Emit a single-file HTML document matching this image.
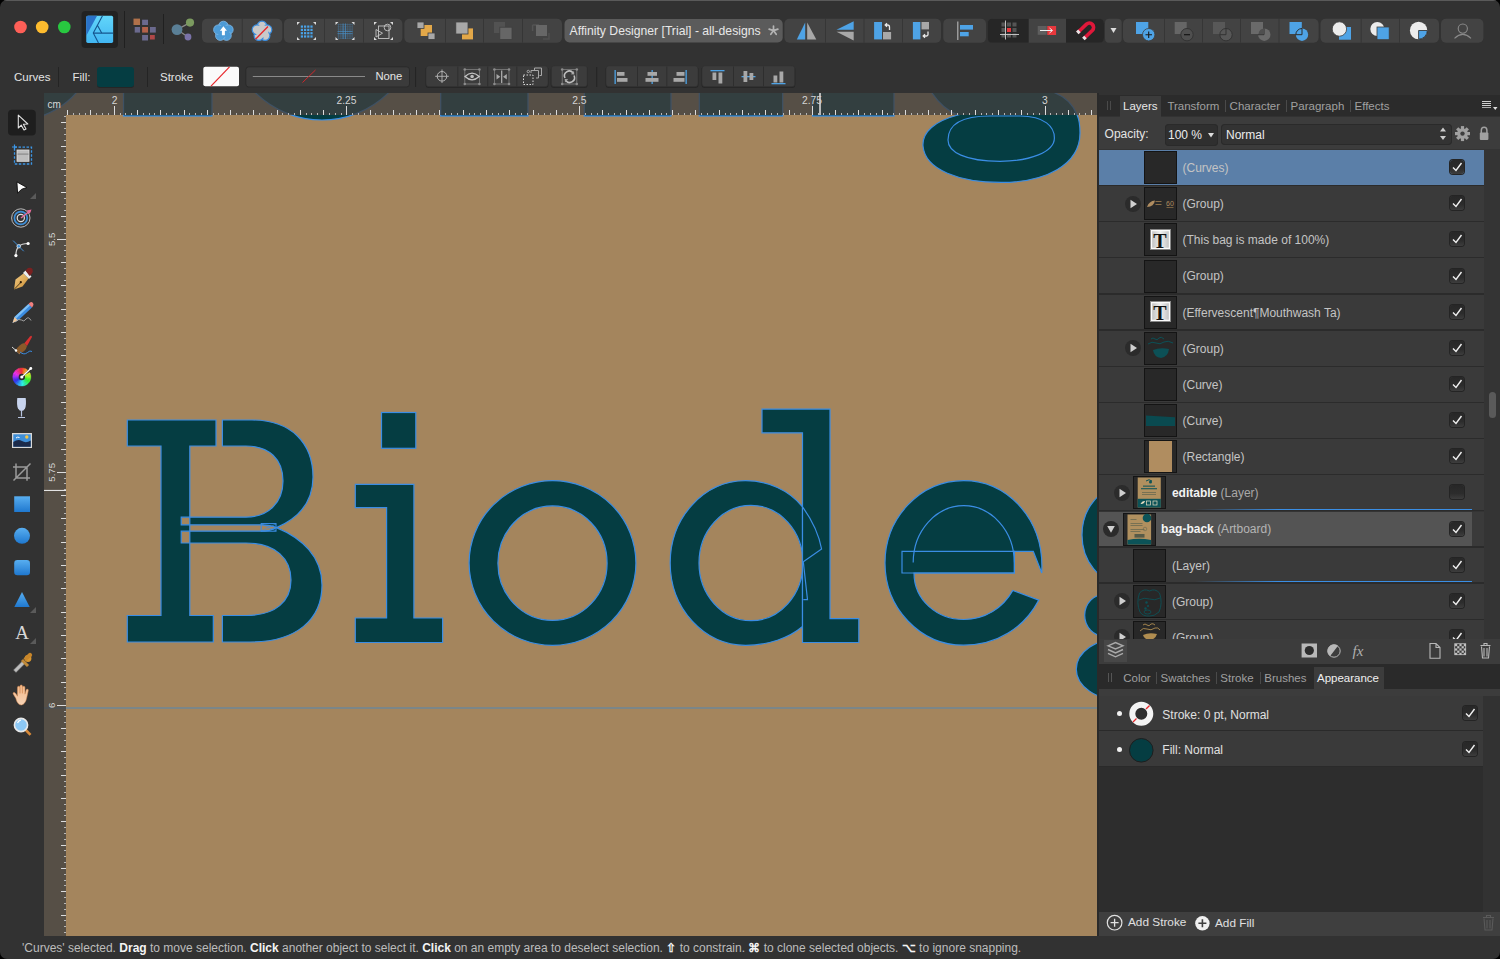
<!DOCTYPE html>
<html><head><meta charset="utf-8">
<style>
*{box-sizing:border-box}
html,body{margin:0;padding:0;width:1500px;height:959px;overflow:hidden;background:#000}
body{font-family:"Liberation Sans",sans-serif;color:#e6e6e6}
.a{position:absolute}
#win{position:absolute;left:0;top:0;width:1500px;height:959px;background:#323232;border-radius:7px;overflow:hidden}
.btn{position:absolute;top:19px;height:24px;background:#3e3e3e;border-radius:4px}
.cbtn{position:absolute;top:66px;height:21px;background:#3a3a3a;border-radius:3px;border:1px solid #2a2a2a}
.sep{position:absolute;width:1px;background:#262626}
.t{position:absolute;white-space:nowrap;line-height:1}
.row{position:absolute;left:1099px;width:385px;height:35px;background:#3a3a3a;border-bottom:1px solid #2b2b2b}
.thumb{position:absolute;top:1px;width:33px;height:33px;background:#282828;border:1px solid #111}
.rt{position:absolute;top:11px;font-size:12px;color:#d2d2d2;white-space:nowrap;line-height:1}
.chk{position:absolute;left:351px;top:10px;width:14px;height:14px;background:#2c2c2c;border-radius:3px;border:1px solid #1f1f1f}
.exp{position:absolute;top:10px;width:15px;height:15px;border-radius:50%;background:#2c2c2c}
.tool{position:absolute;left:9px;width:26px;height:26px}
</style></head>
<body>
<div id="win">
<!-- TOOLBAR -->
<!-- window top border -->
<div class="a" style="left:0;top:0;width:1500px;height:1px;background:#5a5a5a"></div>
<svg class="a" style="left:0;top:0" width="1500" height="60" viewBox="0 0 1500 60">
 <!-- traffic lights -->
 <circle cx="20.5" cy="27" r="6.3" fill="#fe5f57"/>
 <circle cx="42.2" cy="27" r="6.3" fill="#febc2e"/>
 <circle cx="64.3" cy="27" r="6.3" fill="#28c840"/>
 <!-- affinity logo -->
 <rect x="81.5" y="11" width="36.5" height="37" rx="4" fill="#222"/>
 <defs><linearGradient id="lg" x1="0" y1="0" x2="0" y2="1"><stop offset="0" stop-color="#62d6fa"/><stop offset="1" stop-color="#42b6f2"/></linearGradient></defs>
 <rect x="86.25" y="15.8" width="26.9" height="27.1" rx="1.6" fill="url(#lg)"/>
 <path d="M86.25,35.8 V17.4 Q86.25,15.8 87.85,15.8 H97.1Z" fill="#2a72c8"/>
 <path d="M102.5,15.8 L93.3,33.1 L98.5,42.9 M97.7,25.8 L101.7,32.9" stroke="#15558e" stroke-width="1.1" fill="none"/>
 <path d="M93.3,33.1 H113.1" stroke="#15558e" stroke-width="1.3"/>
 <line x1="124.5" y1="11" x2="124.5" y2="48" stroke="#202020"/>
 <!-- personas -->
 <rect x="133.5" y="18.6" width="6.5" height="6.4" fill="#b0714a"/>
 <rect x="142.1" y="19.7" width="5.9" height="5.3" fill="#6b6a8e"/>
 <rect x="134.7" y="27" width="5.3" height="5.6" fill="#6b6a8e"/>
 <rect x="142.1" y="27" width="5.9" height="5.6" fill="#b3624a"/>
 <rect x="150" y="27" width="5.8" height="5.6" fill="#6b6a8e"/>
 <rect x="142.1" y="35" width="5.9" height="5.5" fill="#6b6a8e"/>
 <rect x="150" y="35" width="4.8" height="4.5" fill="#b04848"/>
 <line x1="163.5" y1="14" x2="163.5" y2="44" stroke="#202020"/>
 <!-- share -->
 <path d="M177,29.6 L190,22.6 M177,29.6 L188,37" stroke="#8a8a8a" stroke-width="1.2"/>
 <circle cx="177" cy="29.6" r="5.4" fill="#5a7f96"/>
 <circle cx="190" cy="22.6" r="4.1" fill="#7b9a5f"/>
 <circle cx="188" cy="37" r="3.4" fill="#7a72a8"/>
 <!-- button groups -->
 <g fill="#434343">
  <rect x="202" y="18.7" width="80.3" height="24" rx="5"/>
  <rect x="284" y="18.7" width="118.4" height="24" rx="5"/>
  <rect x="404.4" y="18.7" width="157.6" height="24" rx="5"/>
  <rect x="784.4" y="18.7" width="156.6" height="24" rx="5"/>
  <rect x="943.3" y="18.7" width="42.7" height="24" rx="5"/>
  <rect x="987.6" y="18.7" width="116.4" height="24" rx="5"/>
  <rect x="1105" y="18.7" width="16.7" height="24" rx="4"/>
  <rect x="1123" y="18.7" width="195.6" height="24" rx="5"/>
  <rect x="1320.5" y="18.7" width="118.5" height="24" rx="5"/>
  <rect x="1441" y="18.7" width="42.4" height="24" rx="5"/>
 </g>
 <g fill="#262626">
  <path d="M992.6,18.7 H1028.7 V42.7 H992.6 Q987.6,42.7 987.6,37.7 V23.7 Q987.6,18.7 992.6,18.7Z"/>
  <path d="M1066,18.7 H1099 Q1104,18.7 1104,23.7 V37.7 Q1104,42.7 1099,42.7 H1066Z"/>
 </g>
 <g stroke="#363636" stroke-width="1">
  <line x1="242.3" y1="18.7" x2="242.3" y2="42.7"/>
  <line x1="324.5" y1="18.7" x2="324.5" y2="42.7"/><line x1="363.5" y1="18.7" x2="363.5" y2="42.7"/>
  <line x1="445.5" y1="18.7" x2="445.5" y2="42.7"/><line x1="483.5" y1="18.7" x2="483.5" y2="42.7"/><line x1="522.5" y1="18.7" x2="522.5" y2="42.7"/>
  <line x1="825.5" y1="18.7" x2="825.5" y2="42.7"/><line x1="864" y1="18.7" x2="864" y2="42.7"/><line x1="902.5" y1="18.7" x2="902.5" y2="42.7"/>
  <line x1="1164.5" y1="18.7" x2="1164.5" y2="42.7"/><line x1="1202.5" y1="18.7" x2="1202.5" y2="42.7"/><line x1="1240.5" y1="18.7" x2="1240.5" y2="42.7"/><line x1="1279" y1="18.7" x2="1279" y2="42.7"/>
  <line x1="1361.2" y1="18.7" x2="1361.2" y2="42.7"/><line x1="1399.5" y1="18.7" x2="1399.5" y2="42.7"/>
 </g>
 <!-- G1 icons: flowers -->
 <g transform="translate(223.4,31.3)">
  <g fill="#4d9bd6" stroke="#7fb8e6" stroke-width="0.8">
   <circle cx="0" cy="-5.3" r="4.8"/><circle cx="5" cy="-1.6" r="4.8"/><circle cx="3.1" cy="4.3" r="4.8"/><circle cx="-3.1" cy="4.3" r="4.8"/><circle cx="-5" cy="-1.6" r="4.8"/>
  </g>
  <circle r="6" fill="#4d9bd6"/>
  <path d="M0,-5 L-3.5,-0.5 H-1.5 V4 H1.5 V-0.5 H3.5Z" fill="#fff"/>
 </g>
 <g transform="translate(262,31.3)">
  <g fill="#c9c9c9" stroke="#3a8ee0" stroke-width="1.2">
   <circle cx="0" cy="-5.3" r="4.8"/><circle cx="5" cy="-1.6" r="4.8"/><circle cx="3.1" cy="4.3" r="4.8"/><circle cx="-3.1" cy="4.3" r="4.8"/><circle cx="-5" cy="-1.6" r="4.8"/>
  </g>
  <circle r="6.5" fill="#c9c9c9"/>
  <line x1="-6.5" y1="8" x2="6" y2="-4.8" stroke="#e8262b" stroke-width="1.3"/>
 </g>
 <!-- G2 icons -->
 <g fill="#4aa3e8">
  <g id="dots4">
  <rect x="300.8" y="25.5" width="2.2" height="2.2"/><rect x="304" y="25.5" width="2.2" height="2.2"/><rect x="307.2" y="25.5" width="2.2" height="2.2"/><rect x="310.4" y="25.5" width="2.2" height="2.2"/>
  <rect x="300.8" y="28.8" width="2.2" height="2.2"/><rect x="304" y="28.8" width="2.2" height="2.2"/><rect x="307.2" y="28.8" width="2.2" height="2.2"/><rect x="310.4" y="28.8" width="2.2" height="2.2"/>
  <rect x="300.8" y="32.1" width="2.2" height="2.2"/><rect x="304" y="32.1" width="2.2" height="2.2"/><rect x="307.2" y="32.1" width="2.2" height="2.2"/><rect x="310.4" y="32.1" width="2.2" height="2.2"/>
  <rect x="300.8" y="35.4" width="2.2" height="2.2"/><rect x="304" y="35.4" width="2.2" height="2.2"/><rect x="307.2" y="35.4" width="2.2" height="2.2"/><rect x="310.4" y="35.4" width="2.2" height="2.2"/>
  </g>
 </g>
 <g fill="#dadada">
  <path d="M297,25 V22 H300Z M313,22 H316 V25Z M316,37 V40 H313Z M300,40 H297 V37Z"/>
  <path d="M335.5,25 V22 H338.5Z M351.5,22 H354.5 V25Z M354.5,37 V40 H351.5Z M338.5,40 H335.5 V37Z"/>
  <path d="M374,25 V22 H377Z M390,22 H393 V25Z M393,37 V40 H390Z M377,40 H374 V37Z"/>
 </g>
 <g stroke="#4aa3e8" stroke-width="0.5" opacity="0.45">
  <path d="M337.5,24.5 H352.5 M337.5,26.8 H352.5 M337.5,29.1 H352.5 M337.5,31.4 H352.5 M337.5,33.7 H352.5 M337.5,36 H352.5 M337.5,38.3 H352.5"/>
  <path d="M338.5,23.5 V39 M340.8,23.5 V39 M343.1,23.5 V39 M345.4,23.5 V39 M347.7,23.5 V39 M350,23.5 V39 M352.3,23.5 V39"/>
 </g>
 <path d="M343.1,23.5 V39 M345.4,23.5 V39 M337.5,31.4 H352.5 M337.5,33.7 H352.5" stroke="#4aa3e8" stroke-width="0.6" opacity="0.8"/>
 <g stroke="#c4c4c4" stroke-width="0.9" fill="none">
  <rect x="378.5" y="26" width="10.5" height="12.5"/>
  <circle cx="387.5" cy="27.5" r="3.3"/>
  <path d="M376,29.5 V37 L382.5,33.2Z"/>
 </g>
 <!-- G3 arrange -->
 <rect x="420.7" y="25" width="11.3" height="11" fill="#e3a849"/>
 <rect x="417" y="22" width="7" height="6.4" fill="#a8a8a8" stroke="#3f3f3f" stroke-width="0.8"/>
 <rect x="428" y="33" width="7" height="6.4" fill="#a8a8a8" stroke="#3f3f3f" stroke-width="0.8"/>
 <rect x="462" y="28.4" width="11" height="11" fill="#e3a849"/>
 <rect x="455.8" y="22" width="12.2" height="12" fill="#a8a8a8" stroke="#3f3f3f" stroke-width="0.8"/>
 <rect x="494" y="22" width="11" height="11" fill="#525252"/>
 <rect x="499.8" y="27.2" width="12.2" height="12.2" fill="#666" stroke="#3f3f3f" stroke-width="0.8"/>
 <path d="M532.6,25 V31 M532.6,25 H539" stroke="#545454" stroke-width="1.5"/>
 <rect x="536" y="25" width="11" height="11" fill="#676767"/>
 <path d="M549,33 V39 H543" stroke="#505050" stroke-width="1.5" fill="none"/>
 <!-- title pill -->
 <rect x="564.5" y="19" width="218.2" height="23.5" rx="5" fill="#5b5b5b"/>
 <!-- G4 flips -->
 <path d="M796.8,39.4 L805.2,22.4 V39.4Z" fill="#4ea3e6"/>
 <path d="M807.2,22.4 V39.4 H816.3Z" fill="#a8a8a8"/>
 <path d="M836.5,29.7 L853.7,21.2 V29.7Z" fill="#4ea3e6"/>
 <path d="M836.5,31.8 H853.7 V40.5Z" fill="#a8a8a8"/>
 <rect x="874.1" y="22" width="7.9" height="17.4" fill="#4ea3e6"/>
 <rect x="883" y="32" width="8.1" height="7.4" fill="#a8a8a8"/>
 <path d="M889.5,30 V27 Q889.5,25 887.5,25 H885.5 M887,23.3 L885.2,25 L887,26.7" stroke="#e8e8e8" stroke-width="1.3" fill="none"/>
 <rect x="912.9" y="22" width="7.5" height="17.4" fill="#4ea3e6"/>
 <rect x="921.5" y="22" width="7.5" height="7.4" fill="#a8a8a8"/>
 <path d="M928,31.5 V34.5 Q928,36 926.5,36 H923.5 M925,34.3 L923.2,36 L925,37.7" stroke="#e8e8e8" stroke-width="1.3" fill="none"/>
 <!-- G5 align -->
 <rect x="957" y="21.5" width="1.5" height="18.5" fill="#9a9a9a"/>
 <rect x="960" y="25" width="13" height="4.6" fill="#4ea3e6"/>
 <rect x="960" y="32" width="8.7" height="4.3" fill="#4ea3e6"/>
 <!-- G6 snapping -->
 <g fill="#555">
  <rect x="1001.5" y="22.5" width="4" height="4"/><rect x="1007" y="22.5" width="4" height="4"/><rect x="1012.5" y="22.5" width="4" height="4"/>
  <rect x="1001.5" y="28" width="4" height="4"/><rect x="1012.5" y="28" width="4" height="4"/>
  <rect x="1001.5" y="33.5" width="4" height="4"/><rect x="1007" y="33.5" width="4" height="4"/><rect x="1012.5" y="33.5" width="4" height="4"/>
 </g>
 <rect x="1007" y="28" width="4" height="4" fill="#e8383d"/>
 <path d="M1005.5,20.5 V39.5 M1000,34.5 H1019" stroke="#cfcfcf" stroke-width="0.9"/>
 <rect x="1037.7" y="26" width="9" height="8.8" fill="#5e5e5e"/>
 <rect x="1047.3" y="26" width="8.8" height="9" fill="#e8383d"/>
 <path d="M1040,30.5 H1052 M1049.5,28 L1052.5,30.5 L1049.5,33" stroke="#ececec" stroke-width="1" fill="none"/>
 <path d="M1077.5,32.7 L1086.5,24.2 A4.25,4.25 0 0 1 1092.5,30.2 L1083.6,38.8" stroke="#e0183a" stroke-width="3.6" fill="none"/>
 <path d="M1077.3,32.9 L1079.4,30.9 M1083.4,39 L1085.5,37" stroke="#e4e4e4" stroke-width="3.6"/>
 <path d="M1110.5,28 H1116.5 L1113.5,33Z" fill="#dcdcdc"/>
 <!-- G7 boolean -->
 <rect x="1136" y="22" width="12.3" height="12" fill="#4ea3e6"/>
 <circle cx="1148.7" cy="34.7" r="6.2" fill="#4ea3e6" stroke="#3f3f3f" stroke-width="0.8"/>
 <path d="M1145.5,34.7 H1152 M1148.7,31.5 V38" stroke="#1a1a1a" stroke-width="1.1"/>
 <rect x="1174.7" y="22" width="12" height="12" fill="#666"/>
 <circle cx="1187" cy="34.7" r="6.2" fill="#4f4f4f" stroke="#333" stroke-width="1"/>
 <path d="M1184,34.7 H1190" stroke="#151515" stroke-width="1.2"/>
 <rect x="1213" y="22" width="12" height="12" fill="#585858"/>
 <circle cx="1226" cy="34.7" r="6.2" fill="#575757" stroke="#333" stroke-width="1"/>
 <path d="M1220,34.7 H1226 V28.5" stroke="#333" stroke-width="1" fill="none"/>
 <rect x="1251" y="22" width="12" height="12" fill="#6a6a6a"/>
 <circle cx="1264.3" cy="34.7" r="6.2" fill="#6a6a6a"/>
 <path d="M1258,34.7 H1264 V28.5" stroke="#333" stroke-width="1" fill="none"/>
 <path d="M1258.5,34 A6.2,6.2 0 0 1 1264.3,28.5 V34Z" fill="#4f4f4f"/>
 <rect x="1289.5" y="22" width="12.3" height="12" fill="#4ea3e6"/>
 <circle cx="1302" cy="34.7" r="6.2" fill="#4ea3e6"/>
 <path d="M1295.8,34.7 A6.2,6.2 0 0 1 1302,28.5 V34.7Z" fill="none" stroke="#2a2a2a" stroke-width="1"/>
 <!-- G8 geometry -->
 <rect x="1339" y="27" width="12" height="12.7" fill="#4ea3e6"/>
 <circle cx="1339.4" cy="29" r="7.2" fill="#ececec" stroke="#3f3f3f" stroke-width="0.8"/>
 <circle cx="1377.3" cy="29" r="7" fill="#ececec"/>
 <rect x="1377" y="27" width="12.2" height="12.7" fill="#4ea3e6" stroke="#3f3f3f" stroke-width="0.8"/>
 <circle cx="1418.6" cy="30.5" r="8.7" fill="#ececec"/>
 <path d="M1418.6,30.5 H1427.3 A8.7,8.7 0 0 1 1418.6,39.2Z" fill="#4ea3e6" stroke="#2a2a2a" stroke-width="0.8"/>
 <!-- person -->
 <circle cx="1462.8" cy="28.6" r="4.6" fill="none" stroke="#8a8a8a" stroke-width="1.1"/>
 <path d="M1454.5,38.3 Q1462.8,30.5 1471,38.3" fill="none" stroke="#8a8a8a" stroke-width="1.1"/>
</svg>
<div class="t" style="left:569.6px;top:25px;font-size:12.2px;color:#e8e8e8">Affinity Designer [Trial] - all-designs</div>
<svg class="a" style="left:760px;top:20px" width="25" height="22" viewBox="760 20 25 22"><path d="M773.5,30.6 L773.50,26.00 M773.5,30.6 L777.87,29.18 M773.5,30.6 L776.20,34.32 M773.5,30.6 L770.80,34.32 M773.5,30.6 L769.13,29.18 " stroke="#b4b4b4" stroke-width="1.7" stroke-linecap="round"/></svg>

<!-- /TOOLBAR -->

<!-- CONTEXT -->
<div class="t" style="left:14px;top:72.3px;font-size:11.5px;color:#e4e4e4">Curves</div>
<div class="sep" style="left:58px;top:67px;height:20px;background:#242424"></div>
<div class="t" style="left:72.5px;top:72.3px;font-size:11.5px;color:#e4e4e4">Fill:</div>
<div class="a" style="left:96.6px;top:66.8px;width:37px;height:20px;background:#053d42;border-radius:3px;box-shadow:0 1px 0 #262626"></div>
<div class="sep" style="left:146.8px;top:67px;height:20px;background:#242424"></div>
<div class="t" style="left:160px;top:72.3px;font-size:11.5px;color:#e4e4e4">Stroke</div>
<svg class="a" style="left:0;top:57px" width="1100" height="36" viewBox="0 57 1100 36">
 <rect x="203.3" y="66.8" width="35.7" height="19.4" rx="2" fill="#fafafa"/>
 <line x1="211" y1="86.2" x2="229.5" y2="66.8" stroke="#e8262b" stroke-width="1.2"/>
 <rect x="245.8" y="66.8" width="163.7" height="20.2" rx="3" fill="#3b3b3b" stroke="#2a2a2a" stroke-width="1"/>
 <line x1="252.8" y1="76.5" x2="365" y2="76.5" stroke="#8a8a8a" stroke-width="1"/>
 <line x1="302.5" y1="82.5" x2="315.5" y2="70" stroke="#d0262b" stroke-width="1"/>
 <line x1="415.6" y1="67" x2="415.6" y2="87" stroke="#242424"/>
 <g fill="#262626">
  <rect x="425.5" y="66.5" width="123" height="21.5" rx="3.5"/>
  <rect x="550.8" y="66.5" width="37" height="21.5" rx="3.5"/>
  <rect x="605.5" y="66.5" width="93" height="21.5" rx="3.5"/>
  <rect x="701.5" y="66.5" width="93.8" height="21.5" rx="3.5"/>
 </g>
 <g fill="#3c3c3c" stroke="#2f2f2f" stroke-width="0.6">
  <rect x="426" y="65.8" width="122" height="21" rx="3"/>
  <rect x="551.3" y="65.8" width="36" height="21" rx="3"/>
  <rect x="606" y="65.8" width="92" height="21" rx="3"/>
  <rect x="702" y="65.8" width="92.8" height="21" rx="3"/>
 </g>
 <g stroke="#2e2e2e" stroke-width="1">
  <line x1="457.8" y1="66.5" x2="457.8" y2="86.5"/><line x1="487.7" y1="66.5" x2="487.7" y2="86.5"/><line x1="516.8" y1="66.5" x2="516.8" y2="86.5"/>
  <line x1="637.5" y1="66.5" x2="637.5" y2="86.5"/><line x1="666.8" y1="66.5" x2="666.8" y2="86.5"/>
  <line x1="733.5" y1="66.5" x2="733.5" y2="86.5"/><line x1="763.5" y1="66.5" x2="763.5" y2="86.5"/>
 </g>
 <line x1="596.7" y1="67" x2="596.7" y2="87" stroke="#242424"/>
 <g stroke="#b4b4b4" stroke-width="1" fill="none">
  <circle cx="442" cy="76.3" r="4.8"/>
  <path d="M442,69.5 V83 M435.2,76.3 H448.8" stroke-width="0.9"/>
  <rect x="464.8" y="69.5" width="14.6" height="14.5" stroke="#808080" stroke-width="0.8"/>
  <path d="M465,76.5 Q472,69.8 479.2,76.5 Q472,83.2 465,76.5Z" stroke-width="1.3" stroke="#c4c4c4"/>
  <rect x="494.4" y="69.5" width="14.6" height="14.5" stroke="#808080" stroke-width="0.8"/>
  <path d="M501.7,70.5 V83" stroke-width="1.2"/>
  <rect x="562.2" y="69.5" width="14.6" height="14.5" stroke="#808080" stroke-width="0.8"/>
  <g transform="translate(4.5,0)"><path d="M560.5,78 A4.8,4.8 0 0 1 568.5,72.8 M569.5,75.5 A4.8,4.8 0 0 1 561.5,80.7" stroke-width="1.6" stroke="#c0c0c0"/><path d="M569.5,71 L569.8,74.5 L566.3,74.2Z M560.5,82.5 L560.2,79 L563.7,79.3Z" fill="#a8a8a8" stroke="none"/></g>
 </g>
 <circle cx="472.1" cy="76.5" r="1.8" fill="#bdbdbd"/>
 <path d="M496.5,74 V79.5 L500.3,76.8Z M506.8,74 V79.5 L503,76.8Z" fill="#a8a8a8"/>
 <g fill="#8c8c8c">
  <circle cx="464.8" cy="69.5" r="1.3"/><circle cx="479.4" cy="69.5" r="1.3"/><circle cx="464.8" cy="84" r="1.3"/><circle cx="479.4" cy="84" r="1.3"/>
  <circle cx="494.4" cy="69.5" r="1.3"/><circle cx="509" cy="69.5" r="1.3"/><circle cx="494.4" cy="84" r="1.3"/><circle cx="509" cy="84" r="1.3"/>
  <circle cx="562.2" cy="69.5" r="1.3"/><circle cx="576.8" cy="69.5" r="1.3"/><circle cx="562.2" cy="84" r="1.3"/><circle cx="576.8" cy="84" r="1.3"/>
 </g>
 <g fill="none" stroke="#d8d8d8" stroke-width="1">
  <rect x="523.5" y="75" width="9.5" height="9.5" stroke-dasharray="1.5 1.5"/>
  <path d="M531,73 V70.5 H538.5 V78 H536 M534.5,70 V68 H541.5 V75.5 H539.5" stroke="#a8a8a8"/>
 </g>
 <circle cx="528.3" cy="71.5" r="1.2" fill="none" stroke="#bbb" stroke-width="0.8"/>
 <!-- align icons -->
 <rect x="614.5" y="70" width="1.3" height="14" fill="#4ea3e6"/>
 <rect x="617" y="72" width="7.5" height="3.8" fill="#a8a8a8"/><rect x="617" y="78" width="10.5" height="3.8" fill="#a8a8a8"/>
 <rect x="651.5" y="70" width="1.3" height="14" fill="#4ea3e6"/>
 <rect x="647.5" y="72" width="9.5" height="3.8" fill="#a8a8a8"/><rect x="645.5" y="78" width="13" height="3.8" fill="#a8a8a8"/>
 <rect x="685.5" y="70" width="1.3" height="14" fill="#4ea3e6"/>
 <rect x="676.5" y="72" width="8" height="3.8" fill="#a8a8a8"/><rect x="673.5" y="78" width="11" height="3.8" fill="#a8a8a8"/>
 <rect x="710.5" y="70" width="14" height="1.3" fill="#4ea3e6"/>
 <rect x="712.5" y="72.5" width="3.8" height="7.5" fill="#a8a8a8"/><rect x="718.5" y="72.5" width="3.8" height="11" fill="#a8a8a8"/>
 <rect x="741.5" y="76" width="14" height="1.3" fill="#4ea3e6"/>
 <rect x="743.5" y="71" width="3.8" height="11" fill="#a8a8a8"/><rect x="749.5" y="73" width="3.8" height="7" fill="#a8a8a8"/>
 <rect x="771.5" y="83" width="14" height="1.3" fill="#4ea3e6"/>
 <rect x="773.5" y="75.5" width="3.8" height="7" fill="#a8a8a8"/><rect x="779.5" y="71.5" width="3.8" height="11" fill="#a8a8a8"/>
</svg>
<div class="t" style="left:375.4px;top:70.5px;font-size:11.3px;color:#e4e4e4">None</div>

<!-- /CONTEXT -->
<!-- TOOLS -->
<svg class="a" style="left:0;top:100px" width="44" height="650" viewBox="0 100 44 650">
 <defs>
  <linearGradient id="bg1" x1="0" y1="0" x2="0" y2="1"><stop offset="0" stop-color="#58aef0"/><stop offset="1" stop-color="#1f78cf"/></linearGradient>
  <linearGradient id="gold" x1="0" y1="0" x2="1" y2="1"><stop offset="0" stop-color="#f6d08a"/><stop offset="1" stop-color="#c98a2e"/></linearGradient>
  <linearGradient id="skin" x1="0" y1="0" x2="0" y2="1"><stop offset="0" stop-color="#f3b98a"/><stop offset="1" stop-color="#f7d3b5"/></linearGradient>
  <radialGradient id="cw"><stop offset="0.35" stop-color="#fff"/><stop offset="1" stop-color="#fff" stop-opacity="0"/></radialGradient>
 </defs>
 <rect x="8" y="109.7" width="27.8" height="25.8" rx="4" fill="#1e1e1e"/>
 <!-- move tool -->
 <path d="M18.3,115.2 V128 L21.3,125.2 L24,130 L26,129 L23.4,124.3 L27.8,124Z" fill="#1e1e1e" stroke="#e0e0e0" stroke-width="1.1" stroke-linejoin="round"/>
 <!-- artboard -->
 <rect x="14.5" y="147.2" width="17" height="16.8" fill="none" stroke="#3c96e6" stroke-width="1.3" stroke-dasharray="2.5 1.5"/>
 <path d="M12,147 H17 M14.5,144.5 V149.5" stroke="#3c96e6" stroke-width="1.2"/>
 <rect x="17" y="150" width="12" height="11.3" fill="#bdbdbd" stroke="#e0e0e0" stroke-width="0.8"/>
 <rect x="17.5" y="153.5" width="11" height="1.2" fill="#8a8a8a"/>
 <!-- node tool -->
 <path d="M16.9,181.9 L26.9,187.5 L21.8,189.2 L17.6,193.1Z" fill="#fafafa" stroke="#0a0a0a" stroke-width="0.9" stroke-linejoin="round"/>
 <path d="M30,199 L36,193 V199Z" fill="#5a5a5a"/>
 <!-- corner tool -->
 <circle cx="20.8" cy="218" r="9.2" fill="none" stroke="#c8c8c8" stroke-width="0.9"/>
 <circle cx="20.8" cy="218" r="6.4" fill="none" stroke="#3f8fd8" stroke-width="1.7"/>
 <circle cx="20.8" cy="218" r="3.6" fill="none" stroke="#e0e0e0" stroke-width="1.2"/>
 <path d="M21,218 L30.5,210.5" stroke="#e56c9a" stroke-width="1.5"/>
 <path d="M31.5,209.5 L26.5,210.5 L29.8,213.8Z" fill="#e56c9a"/>
 <!-- point transform -->
 <path d="M13.1,240.6 L23.75,251.25" stroke="#3f8fd8" stroke-width="1"/>
 <path d="M15.9,255.6 Q15.9,249.5 18.75,246.25 Q21.5,243.5 28.1,243.5" stroke="#d0d0d0" stroke-width="1.2" fill="none"/>
 <circle cx="18.75" cy="246.25" r="1.8" fill="#3f8fd8" stroke="#e8e8e8" stroke-width="0.8"/>
 <circle cx="28.1" cy="243.5" r="1.6" fill="#fff"/>
 <circle cx="15.9" cy="255.6" r="1.6" fill="#fff"/>
 <!-- pen -->
 <path d="M14,289.5 L15.5,279.5 L23.5,273.5 L28.5,278.5 L22.5,286.5Z" fill="url(#gold)"/>
 <path d="M14,289.5 L20.3,283" stroke="#3a2a10" stroke-width="0.9"/>
 <circle cx="20.8" cy="282.2" r="1.1" fill="#2a1a08"/>
 <path d="M23,273 L25.5,270.5 L31.5,276.5 L29,279Z" fill="#eee"/>
 <path d="M25.5,270.5 L28,268 Q31,267 32.5,269 Q33.5,272 31.5,274 L29.5,276Z" fill="#7a2020"/>
 <!-- pencil -->
 <path d="M12.5,323 L14.5,317 L28.5,304 L32,307.5 L18,320.5Z" fill="#3a8be0"/>
 <path d="M14.5,317 L28.5,304 L30,305.5 L16,318.7Z" fill="#7fc0f5"/>
 <path d="M28.5,304 L30,302.5 Q31.5,301.5 33,303 Q34,304.5 33,306 L32,307.5Z" fill="#f08080"/>
 <path d="M12.5,323 L14.5,317 L18,320.5Z" fill="#f2c89a"/>
 <path d="M15,322 Q19,318 21.5,320 Q24,322.5 26,319 Q28.5,316 31,320.5" stroke="#aaa" stroke-width="0.9" fill="none"/>
 <!-- brush -->
 <path d="M12,347 L20,354" stroke="#e8e8e8" stroke-width="0.9"/>
 <path d="M15.8,350.5 Q19,344 24.5,343 L27,346 Q25.8,351.5 19,354 Z" fill="#8a5a2a"/>
 <path d="M24.5,343 L30,336.5 Q31.5,335 32,337 L27,346Z" fill="#d83030"/>
 <path d="M20,352 Q24,355.5 27.5,352.5 Q30,350 32,351.5" stroke="#3a8be0" stroke-width="1" fill="none"/>
 <circle cx="16" cy="350.5" r="1.2" fill="#fff"/>
 <!-- colour wheel -->
 <path d="M21.8,377 L21.80,368.00 A9,9 0 0 1 23.36,368.14Z" fill="#f74131" stroke="#f74131" stroke-width="0.4"/><path d="M21.8,377 L23.36,368.14 A9,9 0 0 1 24.88,368.54Z" fill="#f76231" stroke="#f76231" stroke-width="0.4"/><path d="M21.8,377 L24.88,368.54 A9,9 0 0 1 26.30,369.21Z" fill="#f78331" stroke="#f78331" stroke-width="0.4"/><path d="M21.8,377 L26.30,369.21 A9,9 0 0 1 27.59,370.11Z" fill="#f7a431" stroke="#f7a431" stroke-width="0.4"/><path d="M21.8,377 L29.59,372.50 A9,9 0 0 1 30.26,373.92Z" fill="#e6f731" stroke="#e6f731" stroke-width="0.4"/><path d="M21.8,377 L30.26,373.92 A9,9 0 0 1 30.66,375.44Z" fill="#c5f731" stroke="#c5f731" stroke-width="0.4"/><path d="M21.8,377 L30.66,375.44 A9,9 0 0 1 30.80,377.00Z" fill="#a4f731" stroke="#a4f731" stroke-width="0.4"/><path d="M21.8,377 L30.80,377.00 A9,9 0 0 1 30.66,378.56Z" fill="#83f731" stroke="#83f731" stroke-width="0.4"/><path d="M21.8,377 L30.66,378.56 A9,9 0 0 1 30.26,380.08Z" fill="#62f731" stroke="#62f731" stroke-width="0.4"/><path d="M21.8,377 L30.26,380.08 A9,9 0 0 1 29.59,381.50Z" fill="#41f731" stroke="#41f731" stroke-width="0.4"/><path d="M21.8,377 L29.59,381.50 A9,9 0 0 1 28.69,382.79Z" fill="#31f741" stroke="#31f741" stroke-width="0.4"/><path d="M21.8,377 L28.69,382.79 A9,9 0 0 1 27.59,383.89Z" fill="#31f762" stroke="#31f762" stroke-width="0.4"/><path d="M21.8,377 L27.59,383.89 A9,9 0 0 1 26.30,384.79Z" fill="#31f783" stroke="#31f783" stroke-width="0.4"/><path d="M21.8,377 L26.30,384.79 A9,9 0 0 1 24.88,385.46Z" fill="#31f7a4" stroke="#31f7a4" stroke-width="0.4"/><path d="M21.8,377 L24.88,385.46 A9,9 0 0 1 23.36,385.86Z" fill="#31f7c5" stroke="#31f7c5" stroke-width="0.4"/><path d="M21.8,377 L23.36,385.86 A9,9 0 0 1 21.80,386.00Z" fill="#31f7e6" stroke="#31f7e6" stroke-width="0.4"/><path d="M21.8,377 L21.80,386.00 A9,9 0 0 1 20.24,385.86Z" fill="#31e6f7" stroke="#31e6f7" stroke-width="0.4"/><path d="M21.8,377 L20.24,385.86 A9,9 0 0 1 18.72,385.46Z" fill="#31c5f7" stroke="#31c5f7" stroke-width="0.4"/><path d="M21.8,377 L18.72,385.46 A9,9 0 0 1 17.30,384.79Z" fill="#31a4f7" stroke="#31a4f7" stroke-width="0.4"/><path d="M21.8,377 L17.30,384.79 A9,9 0 0 1 16.01,383.89Z" fill="#3183f7" stroke="#3183f7" stroke-width="0.4"/><path d="M21.8,377 L16.01,383.89 A9,9 0 0 1 14.91,382.79Z" fill="#3162f7" stroke="#3162f7" stroke-width="0.4"/><path d="M21.8,377 L14.91,382.79 A9,9 0 0 1 14.01,381.50Z" fill="#3141f7" stroke="#3141f7" stroke-width="0.4"/><path d="M21.8,377 L14.01,381.50 A9,9 0 0 1 13.34,380.08Z" fill="#4131f7" stroke="#4131f7" stroke-width="0.4"/><path d="M21.8,377 L13.34,380.08 A9,9 0 0 1 12.94,378.56Z" fill="#6231f7" stroke="#6231f7" stroke-width="0.4"/><path d="M21.8,377 L12.94,378.56 A9,9 0 0 1 12.80,377.00Z" fill="#8331f7" stroke="#8331f7" stroke-width="0.4"/><path d="M21.8,377 L12.80,377.00 A9,9 0 0 1 12.94,375.44Z" fill="#a431f7" stroke="#a431f7" stroke-width="0.4"/><path d="M21.8,377 L12.94,375.44 A9,9 0 0 1 13.34,373.92Z" fill="#c531f7" stroke="#c531f7" stroke-width="0.4"/><path d="M21.8,377 L13.34,373.92 A9,9 0 0 1 14.01,372.50Z" fill="#e631f7" stroke="#e631f7" stroke-width="0.4"/><path d="M21.8,377 L14.01,372.50 A9,9 0 0 1 14.91,371.21Z" fill="#f731e6" stroke="#f731e6" stroke-width="0.4"/><path d="M21.8,377 L14.91,371.21 A9,9 0 0 1 16.01,370.11Z" fill="#f731c5" stroke="#f731c5" stroke-width="0.4"/><path d="M21.8,377 L16.01,370.11 A9,9 0 0 1 17.30,369.21Z" fill="#f731a4" stroke="#f731a4" stroke-width="0.4"/><path d="M21.8,377 L17.30,369.21 A9,9 0 0 1 18.72,368.54Z" fill="#f73183" stroke="#f73183" stroke-width="0.4"/><path d="M21.8,377 L18.72,368.54 A9,9 0 0 1 20.24,368.14Z" fill="#f73162" stroke="#f73162" stroke-width="0.4"/><path d="M21.8,377 L20.24,368.14 A9,9 0 0 1 21.80,368.00Z" fill="#f73141" stroke="#f73141" stroke-width="0.4"/>
 <circle cx="21.8" cy="377" r="3.2" fill="#2a2a2a"/>
 <path d="M21.8,377 L30.8,368.5" stroke="#fff" stroke-width="1.2"/>
 <circle cx="21.8" cy="377" r="1.6" fill="#fff"/>
 <circle cx="30.8" cy="368.5" r="1.4" fill="#fff"/>
 <!-- glass -->
 <path d="M17.3,398 H25.7 Q26.5,405 25,408.5 Q23.5,411 21.5,411 Q19.5,411 18,408.5 Q16.5,405 17.3,398Z" fill="#c8d4ee"/>
 <path d="M21.5,411 V416.5 M18,417.5 H25" stroke="#b8c4e0" stroke-width="1.2"/>
 <!-- image -->
 <rect x="12" y="433" width="20" height="15" fill="#d8d8d8"/>
 <rect x="13.3" y="434.3" width="17.4" height="12.4" fill="#3f8fd8"/>
 <path d="M13.3,442 Q18,438.5 22,441 Q26,443.5 30.7,440.5 V446.7 H13.3Z" fill="#1b2a4a"/>
 <circle cx="26.8" cy="437" r="1.7" fill="#f5c542"/>
 <path d="M16,438 Q17.5,436.5 19.5,437.5" stroke="#fff" stroke-width="1" fill="none"/>
 <!-- crop -->
 <path d="M16,463.5 V478 H30 M13,467 H27 V480.8 M13.5,480.5 L30.5,463.5" stroke="#9a9a9a" stroke-width="1.5" fill="none"/>
 <!-- rect ellipse rounded -->
 <rect x="14.2" y="496.3" width="15.8" height="15.7" fill="url(#bg1)"/>
 <circle cx="22" cy="535.8" r="8" fill="url(#bg1)"/>
 <rect x="14.2" y="560" width="15.8" height="15.2" rx="3.2" fill="url(#bg1)"/>
 <!-- triangle -->
 <path d="M14.3,607 L22,592 L29.7,607Z" fill="url(#bg1)"/>
 <path d="M30,613 L36,607 V613Z" fill="#5a5a5a"/>
 <!-- text -->
 <text x="22" y="638.5" font-family="Liberation Serif" font-size="19" fill="#d8d8d8" text-anchor="middle">A</text>
 <path d="M30,644 L36,638 V644Z" fill="#5a5a5a"/>
 <!-- eyedropper -->
 <path d="M14,671.5 L23.5,662 L26,664.5 L16.5,674Z" fill="#bdbdbd" stroke="#666" stroke-width="0.5" transform="translate(-0.5,-1.5)"/>
 <path d="M22,660 L28,666" stroke="#c08a3a" stroke-width="3"/>
 <circle cx="28" cy="658.5" r="3.4" fill="#d9962e"/>
 <path d="M26,661 L23.5,658.5 L28.5,653.5 Q30,652 31.5,653.5 Q33,655 31.5,656.5Z" fill="#c8862a"/>
 <!-- hand -->
 <path transform="translate(1.7,123.1) scale(0.83)" d="M17,693 L14,688 Q13,686.5 14.5,686 Q16,685.5 17.5,688 L19,690.5 V680 Q19,678.5 20.5,678.5 Q22,678.5 22,680 V687 V678.8 Q22,677 23.5,677 Q25,677 25,678.8 V687 V680 Q25,678.5 26.5,678.5 Q28,678.5 28,680 V688 L29.5,683 Q30.2,681.5 31.3,682 Q32.3,682.5 32,684 L30,693 Q28.5,700 24,701 Q19,701.5 17,693Z" fill="url(#skin)" stroke="#d88e55" stroke-width="0.6"/>
 <!-- zoom -->
 <path d="M25.3,729.5 L30.5,734.8" stroke="#d88a3a" stroke-width="2.6"/>
 <circle cx="21" cy="725" r="6.6" fill="#8cc8f5" stroke="#e8e8e8" stroke-width="1.6"/>
 <path d="M17.5,723 Q18.5,720.5 21,720" stroke="#fff" stroke-width="1.2" fill="none"/>
</svg>

<!-- /TOOLS -->
<!-- CANVAS -->
<svg class="a" style="left:44px;top:93px" width="1053" height="843" viewBox="44 93 1053 843">
<rect x="44" y="93" width="1053" height="843" fill="#a4855d"/>
<g fill="#053d42" stroke="#3a8de4" stroke-width="1.2">
 <!-- ruler-area shapes -->
 <ellipse cx="10" cy="55" rx="80.6" ry="66.2"/>
 <rect x="123.5" y="40" width="88.5" height="76"/>
 <circle cx="322" cy="25" r="95"/>
 <rect x="440.7" y="40" width="87.3" height="76"/>
 <rect x="584.3" y="40" width="86.7" height="76"/>
 <rect x="699.3" y="40" width="83.4" height="76"/>
 <rect x="812.5" y="40" width="81.5" height="76"/>
 <path d="M932,60 L932,93 C940,105 950,112 958,115 C935,121 922,132 923,146 C925,170 960,182.4 1001,182.4 C1045,182.4 1080,165 1080,133 C1080,124 1079,119 1077,114.7 C1072,102 1063,95 1050,91 L1040,60 Z"/>
 <path fill="none" d="M948,140 C948,125 960,116 990,116 L1020,116 C1045,116 1054.4,127 1054.4,138 C1054.4,152 1030,161.3 1000,161.3 C965,161.3 948,152 948,140 Z"/>
 <!-- B -->
 <path fill-rule="evenodd" d="M127.3,420 H216 V446 H189.8 V615.5 H213.3 V642 H127.3 V615.5 H161 V446 H127.3 Z
  M222.4,420 H252 C291,420 313,443 313,477 C313,502 299,518 276.4,527.6 C272,525.5 266,524.8 261,524.8 H181.2 V517.2 H246 C269,517 283,502 283,481 C283,459 269,446 246,446 H222.4 Z
  M181.2,531.2 H261 C266,531.2 272,530 276.4,527.6 C302,538 322,557 322,585 C322,620 296,642 250,642 H222.4 V615.5 H246 C276,615.5 291,601 291,580 C291,559 276,543 246,543 H181.2 Z"/>
 <rect x="261.2" y="523.6" width="14.8" height="7.6" fill="none" stroke-width="1.1"/>
 <path d="M261.5,531 L276,524 M261.5,524 L276,530.8" fill="none" stroke-width="0.6"/>
 <!-- i -->
 <rect x="381.5" y="412.5" width="34.3" height="35.8"/>
 <path d="M355.3,484.3 H413.9 V618 H442.6 V642.5 H355.3 V618 H386.6 V507.7 H355.3 Z"/>
 <!-- o -->
 <path fill-rule="evenodd" d="M469.1,563 A83.4,82.3 0 1 0 635.9,563 A83.4,82.3 0 1 0 469.1,563 Z M497.9,563.2 A54.6,57.2 0 1 0 607.1,563.2 A54.6,57.2 0 1 0 497.9,563.2 Z"/>
 <!-- d -->
 <path fill-rule="evenodd" d="M802.5,506.8 C789,490 768,480.7 745.6,480.7 C704,480.7 670.2,517.5 670.2,563 C670.2,608.5 704,645.3 745.6,645.3 C768,645.3 789,638 802.5,626.5 Z M699,563 A52,57.7 0 1 0 803,563 A52,57.7 0 1 0 699,563 Z"/>
 <path d="M762,409.1 H830 V618.6 H858.8 V642.5 H802.5 V432.8 H762 Z"/>
 <path fill="none" d="M802.5,506.8 C812,520 819,535 821.6,549 L803.3,561.7 M803.3,599.7 H807.5 L803.3,561.7"/>
 <!-- e -->
 <path d="M1041.8,573 L1033.3,551.4 H1014.4 V573 H914 C914,600 937,619.5 963.75,619.5 C985,619.5 1003,608 1012.8,590.4 L1038.8,600.1 C1024,628 997,645.2 963.5,645.2 C920,645.2 885,608 885,563 C885,518 920,480.6 963.5,480.6 C1007,480.6 1041.9,518 1041.9,566 Z"/>
 <path fill="none" d="M913.2,562.6 C913.2,531 936,505.7 963.75,505.7 C991.5,505.7 1014.3,531 1014.3,562.6 M902,551.4 H1014.4 V573 H902 Z"/>
 <!-- g -->
 <ellipse cx="1122" cy="535" rx="40" ry="48"/>
 <ellipse cx="1104.7" cy="615.3" rx="20" ry="21"/>
 <ellipse cx="1121.3" cy="669.2" rx="45" ry="31"/>
</g>
<rect x="44" y="707" width="1053" height="2" fill="#7b8688"/>
<!-- rulers overlay -->
<path d="M44,93 H1097 V115 H66 V936 H44 Z" fill="rgb(64,64,64)" fill-opacity="0.78"/>
<g shape-rendering="crispEdges">
<line x1="67.5" y1="110" x2="67.5" y2="115" stroke="#dcdcdc"/>
<line x1="73.5" y1="113" x2="73.5" y2="115" stroke="#b8b8b8"/>
<line x1="79.5" y1="113" x2="79.5" y2="115" stroke="#b8b8b8"/>
<line x1="85.5" y1="113" x2="85.5" y2="115" stroke="#b8b8b8"/>
<line x1="90.5" y1="110" x2="90.5" y2="115" stroke="#dcdcdc"/>
<line x1="96.5" y1="113" x2="96.5" y2="115" stroke="#b8b8b8"/>
<line x1="102.5" y1="113" x2="102.5" y2="115" stroke="#b8b8b8"/>
<line x1="108.5" y1="113" x2="108.5" y2="115" stroke="#b8b8b8"/>
<line x1="114.5" y1="106" x2="114.5" y2="115" stroke="#dcdcdc"/>
<line x1="120.5" y1="113" x2="120.5" y2="115" stroke="#b8b8b8"/>
<line x1="125.5" y1="113" x2="125.5" y2="115" stroke="#b8b8b8"/>
<line x1="131.5" y1="113" x2="131.5" y2="115" stroke="#b8b8b8"/>
<line x1="137.5" y1="110" x2="137.5" y2="115" stroke="#dcdcdc"/>
<line x1="143.5" y1="113" x2="143.5" y2="115" stroke="#b8b8b8"/>
<line x1="149.5" y1="113" x2="149.5" y2="115" stroke="#b8b8b8"/>
<line x1="154.5" y1="113" x2="154.5" y2="115" stroke="#b8b8b8"/>
<line x1="160.5" y1="110" x2="160.5" y2="115" stroke="#dcdcdc"/>
<line x1="166.5" y1="113" x2="166.5" y2="115" stroke="#b8b8b8"/>
<line x1="172.5" y1="113" x2="172.5" y2="115" stroke="#b8b8b8"/>
<line x1="178.5" y1="113" x2="178.5" y2="115" stroke="#b8b8b8"/>
<line x1="184.5" y1="110" x2="184.5" y2="115" stroke="#dcdcdc"/>
<line x1="189.5" y1="113" x2="189.5" y2="115" stroke="#b8b8b8"/>
<line x1="195.5" y1="113" x2="195.5" y2="115" stroke="#b8b8b8"/>
<line x1="201.5" y1="113" x2="201.5" y2="115" stroke="#b8b8b8"/>
<line x1="207.5" y1="110" x2="207.5" y2="115" stroke="#dcdcdc"/>
<line x1="213.5" y1="113" x2="213.5" y2="115" stroke="#b8b8b8"/>
<line x1="218.5" y1="113" x2="218.5" y2="115" stroke="#b8b8b8"/>
<line x1="224.5" y1="113" x2="224.5" y2="115" stroke="#b8b8b8"/>
<line x1="230.5" y1="110" x2="230.5" y2="115" stroke="#dcdcdc"/>
<line x1="236.5" y1="113" x2="236.5" y2="115" stroke="#b8b8b8"/>
<line x1="242.5" y1="113" x2="242.5" y2="115" stroke="#b8b8b8"/>
<line x1="248.5" y1="113" x2="248.5" y2="115" stroke="#b8b8b8"/>
<line x1="253.5" y1="110" x2="253.5" y2="115" stroke="#dcdcdc"/>
<line x1="259.5" y1="113" x2="259.5" y2="115" stroke="#b8b8b8"/>
<line x1="265.5" y1="113" x2="265.5" y2="115" stroke="#b8b8b8"/>
<line x1="271.5" y1="113" x2="271.5" y2="115" stroke="#b8b8b8"/>
<line x1="277.5" y1="110" x2="277.5" y2="115" stroke="#dcdcdc"/>
<line x1="282.5" y1="113" x2="282.5" y2="115" stroke="#b8b8b8"/>
<line x1="288.5" y1="113" x2="288.5" y2="115" stroke="#b8b8b8"/>
<line x1="294.5" y1="113" x2="294.5" y2="115" stroke="#b8b8b8"/>
<line x1="300.5" y1="110" x2="300.5" y2="115" stroke="#dcdcdc"/>
<line x1="306.5" y1="113" x2="306.5" y2="115" stroke="#b8b8b8"/>
<line x1="311.5" y1="113" x2="311.5" y2="115" stroke="#b8b8b8"/>
<line x1="317.5" y1="113" x2="317.5" y2="115" stroke="#b8b8b8"/>
<line x1="323.5" y1="110" x2="323.5" y2="115" stroke="#dcdcdc"/>
<line x1="329.5" y1="113" x2="329.5" y2="115" stroke="#b8b8b8"/>
<line x1="335.5" y1="113" x2="335.5" y2="115" stroke="#b8b8b8"/>
<line x1="341.5" y1="113" x2="341.5" y2="115" stroke="#b8b8b8"/>
<line x1="346.5" y1="106" x2="346.5" y2="115" stroke="#dcdcdc"/>
<line x1="352.5" y1="113" x2="352.5" y2="115" stroke="#b8b8b8"/>
<line x1="358.5" y1="113" x2="358.5" y2="115" stroke="#b8b8b8"/>
<line x1="364.5" y1="113" x2="364.5" y2="115" stroke="#b8b8b8"/>
<line x1="370.5" y1="110" x2="370.5" y2="115" stroke="#dcdcdc"/>
<line x1="375.5" y1="113" x2="375.5" y2="115" stroke="#b8b8b8"/>
<line x1="381.5" y1="113" x2="381.5" y2="115" stroke="#b8b8b8"/>
<line x1="387.5" y1="113" x2="387.5" y2="115" stroke="#b8b8b8"/>
<line x1="393.5" y1="110" x2="393.5" y2="115" stroke="#dcdcdc"/>
<line x1="399.5" y1="113" x2="399.5" y2="115" stroke="#b8b8b8"/>
<line x1="405.5" y1="113" x2="405.5" y2="115" stroke="#b8b8b8"/>
<line x1="410.5" y1="113" x2="410.5" y2="115" stroke="#b8b8b8"/>
<line x1="416.5" y1="110" x2="416.5" y2="115" stroke="#dcdcdc"/>
<line x1="422.5" y1="113" x2="422.5" y2="115" stroke="#b8b8b8"/>
<line x1="428.5" y1="113" x2="428.5" y2="115" stroke="#b8b8b8"/>
<line x1="434.5" y1="113" x2="434.5" y2="115" stroke="#b8b8b8"/>
<line x1="439.5" y1="110" x2="439.5" y2="115" stroke="#dcdcdc"/>
<line x1="445.5" y1="113" x2="445.5" y2="115" stroke="#b8b8b8"/>
<line x1="451.5" y1="113" x2="451.5" y2="115" stroke="#b8b8b8"/>
<line x1="457.5" y1="113" x2="457.5" y2="115" stroke="#b8b8b8"/>
<line x1="463.5" y1="110" x2="463.5" y2="115" stroke="#dcdcdc"/>
<line x1="469.5" y1="113" x2="469.5" y2="115" stroke="#b8b8b8"/>
<line x1="474.5" y1="113" x2="474.5" y2="115" stroke="#b8b8b8"/>
<line x1="480.5" y1="113" x2="480.5" y2="115" stroke="#b8b8b8"/>
<line x1="486.5" y1="110" x2="486.5" y2="115" stroke="#dcdcdc"/>
<line x1="492.5" y1="113" x2="492.5" y2="115" stroke="#b8b8b8"/>
<line x1="498.5" y1="113" x2="498.5" y2="115" stroke="#b8b8b8"/>
<line x1="503.5" y1="113" x2="503.5" y2="115" stroke="#b8b8b8"/>
<line x1="509.5" y1="110" x2="509.5" y2="115" stroke="#dcdcdc"/>
<line x1="515.5" y1="113" x2="515.5" y2="115" stroke="#b8b8b8"/>
<line x1="521.5" y1="113" x2="521.5" y2="115" stroke="#b8b8b8"/>
<line x1="527.5" y1="113" x2="527.5" y2="115" stroke="#b8b8b8"/>
<line x1="533.5" y1="110" x2="533.5" y2="115" stroke="#dcdcdc"/>
<line x1="538.5" y1="113" x2="538.5" y2="115" stroke="#b8b8b8"/>
<line x1="544.5" y1="113" x2="544.5" y2="115" stroke="#b8b8b8"/>
<line x1="550.5" y1="113" x2="550.5" y2="115" stroke="#b8b8b8"/>
<line x1="556.5" y1="110" x2="556.5" y2="115" stroke="#dcdcdc"/>
<line x1="562.5" y1="113" x2="562.5" y2="115" stroke="#b8b8b8"/>
<line x1="567.5" y1="113" x2="567.5" y2="115" stroke="#b8b8b8"/>
<line x1="573.5" y1="113" x2="573.5" y2="115" stroke="#b8b8b8"/>
<line x1="579.5" y1="106" x2="579.5" y2="115" stroke="#dcdcdc"/>
<line x1="585.5" y1="113" x2="585.5" y2="115" stroke="#b8b8b8"/>
<line x1="591.5" y1="113" x2="591.5" y2="115" stroke="#b8b8b8"/>
<line x1="597.5" y1="113" x2="597.5" y2="115" stroke="#b8b8b8"/>
<line x1="602.5" y1="110" x2="602.5" y2="115" stroke="#dcdcdc"/>
<line x1="608.5" y1="113" x2="608.5" y2="115" stroke="#b8b8b8"/>
<line x1="614.5" y1="113" x2="614.5" y2="115" stroke="#b8b8b8"/>
<line x1="620.5" y1="113" x2="620.5" y2="115" stroke="#b8b8b8"/>
<line x1="626.5" y1="110" x2="626.5" y2="115" stroke="#dcdcdc"/>
<line x1="631.5" y1="113" x2="631.5" y2="115" stroke="#b8b8b8"/>
<line x1="637.5" y1="113" x2="637.5" y2="115" stroke="#b8b8b8"/>
<line x1="643.5" y1="113" x2="643.5" y2="115" stroke="#b8b8b8"/>
<line x1="649.5" y1="110" x2="649.5" y2="115" stroke="#dcdcdc"/>
<line x1="655.5" y1="113" x2="655.5" y2="115" stroke="#b8b8b8"/>
<line x1="661.5" y1="113" x2="661.5" y2="115" stroke="#b8b8b8"/>
<line x1="666.5" y1="113" x2="666.5" y2="115" stroke="#b8b8b8"/>
<line x1="672.5" y1="110" x2="672.5" y2="115" stroke="#dcdcdc"/>
<line x1="678.5" y1="113" x2="678.5" y2="115" stroke="#b8b8b8"/>
<line x1="684.5" y1="113" x2="684.5" y2="115" stroke="#b8b8b8"/>
<line x1="690.5" y1="113" x2="690.5" y2="115" stroke="#b8b8b8"/>
<line x1="695.5" y1="110" x2="695.5" y2="115" stroke="#dcdcdc"/>
<line x1="701.5" y1="113" x2="701.5" y2="115" stroke="#b8b8b8"/>
<line x1="707.5" y1="113" x2="707.5" y2="115" stroke="#b8b8b8"/>
<line x1="713.5" y1="113" x2="713.5" y2="115" stroke="#b8b8b8"/>
<line x1="719.5" y1="110" x2="719.5" y2="115" stroke="#dcdcdc"/>
<line x1="725.5" y1="113" x2="725.5" y2="115" stroke="#b8b8b8"/>
<line x1="730.5" y1="113" x2="730.5" y2="115" stroke="#b8b8b8"/>
<line x1="736.5" y1="113" x2="736.5" y2="115" stroke="#b8b8b8"/>
<line x1="742.5" y1="110" x2="742.5" y2="115" stroke="#dcdcdc"/>
<line x1="748.5" y1="113" x2="748.5" y2="115" stroke="#b8b8b8"/>
<line x1="754.5" y1="113" x2="754.5" y2="115" stroke="#b8b8b8"/>
<line x1="759.5" y1="113" x2="759.5" y2="115" stroke="#b8b8b8"/>
<line x1="765.5" y1="110" x2="765.5" y2="115" stroke="#dcdcdc"/>
<line x1="771.5" y1="113" x2="771.5" y2="115" stroke="#b8b8b8"/>
<line x1="777.5" y1="113" x2="777.5" y2="115" stroke="#b8b8b8"/>
<line x1="783.5" y1="113" x2="783.5" y2="115" stroke="#b8b8b8"/>
<line x1="789.5" y1="110" x2="789.5" y2="115" stroke="#dcdcdc"/>
<line x1="794.5" y1="113" x2="794.5" y2="115" stroke="#b8b8b8"/>
<line x1="800.5" y1="113" x2="800.5" y2="115" stroke="#b8b8b8"/>
<line x1="806.5" y1="113" x2="806.5" y2="115" stroke="#b8b8b8"/>
<line x1="812.5" y1="106" x2="812.5" y2="115" stroke="#dcdcdc"/>
<line x1="818.5" y1="113" x2="818.5" y2="115" stroke="#b8b8b8"/>
<line x1="823.5" y1="113" x2="823.5" y2="115" stroke="#b8b8b8"/>
<line x1="829.5" y1="113" x2="829.5" y2="115" stroke="#b8b8b8"/>
<line x1="835.5" y1="110" x2="835.5" y2="115" stroke="#dcdcdc"/>
<line x1="841.5" y1="113" x2="841.5" y2="115" stroke="#b8b8b8"/>
<line x1="847.5" y1="113" x2="847.5" y2="115" stroke="#b8b8b8"/>
<line x1="853.5" y1="113" x2="853.5" y2="115" stroke="#b8b8b8"/>
<line x1="858.5" y1="110" x2="858.5" y2="115" stroke="#dcdcdc"/>
<line x1="864.5" y1="113" x2="864.5" y2="115" stroke="#b8b8b8"/>
<line x1="870.5" y1="113" x2="870.5" y2="115" stroke="#b8b8b8"/>
<line x1="876.5" y1="113" x2="876.5" y2="115" stroke="#b8b8b8"/>
<line x1="882.5" y1="110" x2="882.5" y2="115" stroke="#dcdcdc"/>
<line x1="887.5" y1="113" x2="887.5" y2="115" stroke="#b8b8b8"/>
<line x1="893.5" y1="113" x2="893.5" y2="115" stroke="#b8b8b8"/>
<line x1="899.5" y1="113" x2="899.5" y2="115" stroke="#b8b8b8"/>
<line x1="905.5" y1="110" x2="905.5" y2="115" stroke="#dcdcdc"/>
<line x1="911.5" y1="113" x2="911.5" y2="115" stroke="#b8b8b8"/>
<line x1="917.5" y1="113" x2="917.5" y2="115" stroke="#b8b8b8"/>
<line x1="922.5" y1="113" x2="922.5" y2="115" stroke="#b8b8b8"/>
<line x1="928.5" y1="110" x2="928.5" y2="115" stroke="#dcdcdc"/>
<line x1="934.5" y1="113" x2="934.5" y2="115" stroke="#b8b8b8"/>
<line x1="940.5" y1="113" x2="940.5" y2="115" stroke="#b8b8b8"/>
<line x1="946.5" y1="113" x2="946.5" y2="115" stroke="#b8b8b8"/>
<line x1="951.5" y1="110" x2="951.5" y2="115" stroke="#dcdcdc"/>
<line x1="957.5" y1="113" x2="957.5" y2="115" stroke="#b8b8b8"/>
<line x1="963.5" y1="113" x2="963.5" y2="115" stroke="#b8b8b8"/>
<line x1="969.5" y1="113" x2="969.5" y2="115" stroke="#b8b8b8"/>
<line x1="975.5" y1="110" x2="975.5" y2="115" stroke="#dcdcdc"/>
<line x1="981.5" y1="113" x2="981.5" y2="115" stroke="#b8b8b8"/>
<line x1="986.5" y1="113" x2="986.5" y2="115" stroke="#b8b8b8"/>
<line x1="992.5" y1="113" x2="992.5" y2="115" stroke="#b8b8b8"/>
<line x1="998.5" y1="110" x2="998.5" y2="115" stroke="#dcdcdc"/>
<line x1="1004.5" y1="113" x2="1004.5" y2="115" stroke="#b8b8b8"/>
<line x1="1010.5" y1="113" x2="1010.5" y2="115" stroke="#b8b8b8"/>
<line x1="1015.5" y1="113" x2="1015.5" y2="115" stroke="#b8b8b8"/>
<line x1="1021.5" y1="110" x2="1021.5" y2="115" stroke="#dcdcdc"/>
<line x1="1027.5" y1="113" x2="1027.5" y2="115" stroke="#b8b8b8"/>
<line x1="1033.5" y1="113" x2="1033.5" y2="115" stroke="#b8b8b8"/>
<line x1="1039.5" y1="113" x2="1039.5" y2="115" stroke="#b8b8b8"/>
<line x1="1045.5" y1="106" x2="1045.5" y2="115" stroke="#dcdcdc"/>
<line x1="1050.5" y1="113" x2="1050.5" y2="115" stroke="#b8b8b8"/>
<line x1="1056.5" y1="113" x2="1056.5" y2="115" stroke="#b8b8b8"/>
<line x1="1062.5" y1="113" x2="1062.5" y2="115" stroke="#b8b8b8"/>
<line x1="1068.5" y1="110" x2="1068.5" y2="115" stroke="#dcdcdc"/>
<line x1="1074.5" y1="113" x2="1074.5" y2="115" stroke="#b8b8b8"/>
<line x1="1079.5" y1="113" x2="1079.5" y2="115" stroke="#b8b8b8"/>
<line x1="1085.5" y1="113" x2="1085.5" y2="115" stroke="#b8b8b8"/>
<line x1="1091.5" y1="110" x2="1091.5" y2="115" stroke="#dcdcdc"/>
<line x1="64" y1="116.5" x2="66" y2="116.5" stroke="#b8b8b8"/>
<line x1="61" y1="122.5" x2="66" y2="122.5" stroke="#dcdcdc"/>
<line x1="64" y1="128.5" x2="66" y2="128.5" stroke="#b8b8b8"/>
<line x1="64" y1="134.5" x2="66" y2="134.5" stroke="#b8b8b8"/>
<line x1="64" y1="140.5" x2="66" y2="140.5" stroke="#b8b8b8"/>
<line x1="61" y1="146.5" x2="66" y2="146.5" stroke="#dcdcdc"/>
<line x1="64" y1="151.5" x2="66" y2="151.5" stroke="#b8b8b8"/>
<line x1="64" y1="157.5" x2="66" y2="157.5" stroke="#b8b8b8"/>
<line x1="64" y1="163.5" x2="66" y2="163.5" stroke="#b8b8b8"/>
<line x1="61" y1="169.5" x2="66" y2="169.5" stroke="#dcdcdc"/>
<line x1="64" y1="175.5" x2="66" y2="175.5" stroke="#b8b8b8"/>
<line x1="64" y1="181.5" x2="66" y2="181.5" stroke="#b8b8b8"/>
<line x1="64" y1="186.5" x2="66" y2="186.5" stroke="#b8b8b8"/>
<line x1="61" y1="192.5" x2="66" y2="192.5" stroke="#dcdcdc"/>
<line x1="64" y1="198.5" x2="66" y2="198.5" stroke="#b8b8b8"/>
<line x1="64" y1="204.5" x2="66" y2="204.5" stroke="#b8b8b8"/>
<line x1="64" y1="210.5" x2="66" y2="210.5" stroke="#b8b8b8"/>
<line x1="61" y1="216.5" x2="66" y2="216.5" stroke="#dcdcdc"/>
<line x1="64" y1="221.5" x2="66" y2="221.5" stroke="#b8b8b8"/>
<line x1="64" y1="227.5" x2="66" y2="227.5" stroke="#b8b8b8"/>
<line x1="64" y1="233.5" x2="66" y2="233.5" stroke="#b8b8b8"/>
<line x1="57" y1="239.5" x2="66" y2="239.5" stroke="#dcdcdc"/>
<line x1="64" y1="245.5" x2="66" y2="245.5" stroke="#b8b8b8"/>
<line x1="64" y1="250.5" x2="66" y2="250.5" stroke="#b8b8b8"/>
<line x1="64" y1="256.5" x2="66" y2="256.5" stroke="#b8b8b8"/>
<line x1="61" y1="262.5" x2="66" y2="262.5" stroke="#dcdcdc"/>
<line x1="64" y1="268.5" x2="66" y2="268.5" stroke="#b8b8b8"/>
<line x1="64" y1="274.5" x2="66" y2="274.5" stroke="#b8b8b8"/>
<line x1="64" y1="280.5" x2="66" y2="280.5" stroke="#b8b8b8"/>
<line x1="61" y1="285.5" x2="66" y2="285.5" stroke="#dcdcdc"/>
<line x1="64" y1="291.5" x2="66" y2="291.5" stroke="#b8b8b8"/>
<line x1="64" y1="297.5" x2="66" y2="297.5" stroke="#b8b8b8"/>
<line x1="64" y1="303.5" x2="66" y2="303.5" stroke="#b8b8b8"/>
<line x1="61" y1="309.5" x2="66" y2="309.5" stroke="#dcdcdc"/>
<line x1="64" y1="315.5" x2="66" y2="315.5" stroke="#b8b8b8"/>
<line x1="64" y1="320.5" x2="66" y2="320.5" stroke="#b8b8b8"/>
<line x1="64" y1="326.5" x2="66" y2="326.5" stroke="#b8b8b8"/>
<line x1="61" y1="332.5" x2="66" y2="332.5" stroke="#dcdcdc"/>
<line x1="64" y1="338.5" x2="66" y2="338.5" stroke="#b8b8b8"/>
<line x1="64" y1="344.5" x2="66" y2="344.5" stroke="#b8b8b8"/>
<line x1="64" y1="349.5" x2="66" y2="349.5" stroke="#b8b8b8"/>
<line x1="61" y1="355.5" x2="66" y2="355.5" stroke="#dcdcdc"/>
<line x1="64" y1="361.5" x2="66" y2="361.5" stroke="#b8b8b8"/>
<line x1="64" y1="367.5" x2="66" y2="367.5" stroke="#b8b8b8"/>
<line x1="64" y1="373.5" x2="66" y2="373.5" stroke="#b8b8b8"/>
<line x1="61" y1="379.5" x2="66" y2="379.5" stroke="#dcdcdc"/>
<line x1="64" y1="384.5" x2="66" y2="384.5" stroke="#b8b8b8"/>
<line x1="64" y1="390.5" x2="66" y2="390.5" stroke="#b8b8b8"/>
<line x1="64" y1="396.5" x2="66" y2="396.5" stroke="#b8b8b8"/>
<line x1="61" y1="402.5" x2="66" y2="402.5" stroke="#dcdcdc"/>
<line x1="64" y1="408.5" x2="66" y2="408.5" stroke="#b8b8b8"/>
<line x1="64" y1="414.5" x2="66" y2="414.5" stroke="#b8b8b8"/>
<line x1="64" y1="419.5" x2="66" y2="419.5" stroke="#b8b8b8"/>
<line x1="61" y1="425.5" x2="66" y2="425.5" stroke="#dcdcdc"/>
<line x1="64" y1="431.5" x2="66" y2="431.5" stroke="#b8b8b8"/>
<line x1="64" y1="437.5" x2="66" y2="437.5" stroke="#b8b8b8"/>
<line x1="64" y1="443.5" x2="66" y2="443.5" stroke="#b8b8b8"/>
<line x1="61" y1="449.5" x2="66" y2="449.5" stroke="#dcdcdc"/>
<line x1="64" y1="454.5" x2="66" y2="454.5" stroke="#b8b8b8"/>
<line x1="64" y1="460.5" x2="66" y2="460.5" stroke="#b8b8b8"/>
<line x1="64" y1="466.5" x2="66" y2="466.5" stroke="#b8b8b8"/>
<line x1="57" y1="472.5" x2="66" y2="472.5" stroke="#dcdcdc"/>
<line x1="64" y1="478.5" x2="66" y2="478.5" stroke="#b8b8b8"/>
<line x1="64" y1="483.5" x2="66" y2="483.5" stroke="#b8b8b8"/>
<line x1="64" y1="489.5" x2="66" y2="489.5" stroke="#b8b8b8"/>
<line x1="61" y1="495.5" x2="66" y2="495.5" stroke="#dcdcdc"/>
<line x1="64" y1="501.5" x2="66" y2="501.5" stroke="#b8b8b8"/>
<line x1="64" y1="507.5" x2="66" y2="507.5" stroke="#b8b8b8"/>
<line x1="64" y1="513.5" x2="66" y2="513.5" stroke="#b8b8b8"/>
<line x1="61" y1="518.5" x2="66" y2="518.5" stroke="#dcdcdc"/>
<line x1="64" y1="524.5" x2="66" y2="524.5" stroke="#b8b8b8"/>
<line x1="64" y1="530.5" x2="66" y2="530.5" stroke="#b8b8b8"/>
<line x1="64" y1="536.5" x2="66" y2="536.5" stroke="#b8b8b8"/>
<line x1="61" y1="542.5" x2="66" y2="542.5" stroke="#dcdcdc"/>
<line x1="64" y1="548.5" x2="66" y2="548.5" stroke="#b8b8b8"/>
<line x1="64" y1="553.5" x2="66" y2="553.5" stroke="#b8b8b8"/>
<line x1="64" y1="559.5" x2="66" y2="559.5" stroke="#b8b8b8"/>
<line x1="61" y1="565.5" x2="66" y2="565.5" stroke="#dcdcdc"/>
<line x1="64" y1="571.5" x2="66" y2="571.5" stroke="#b8b8b8"/>
<line x1="64" y1="577.5" x2="66" y2="577.5" stroke="#b8b8b8"/>
<line x1="64" y1="582.5" x2="66" y2="582.5" stroke="#b8b8b8"/>
<line x1="61" y1="588.5" x2="66" y2="588.5" stroke="#dcdcdc"/>
<line x1="64" y1="594.5" x2="66" y2="594.5" stroke="#b8b8b8"/>
<line x1="64" y1="600.5" x2="66" y2="600.5" stroke="#b8b8b8"/>
<line x1="64" y1="606.5" x2="66" y2="606.5" stroke="#b8b8b8"/>
<line x1="61" y1="612.5" x2="66" y2="612.5" stroke="#dcdcdc"/>
<line x1="64" y1="617.5" x2="66" y2="617.5" stroke="#b8b8b8"/>
<line x1="64" y1="623.5" x2="66" y2="623.5" stroke="#b8b8b8"/>
<line x1="64" y1="629.5" x2="66" y2="629.5" stroke="#b8b8b8"/>
<line x1="61" y1="635.5" x2="66" y2="635.5" stroke="#dcdcdc"/>
<line x1="64" y1="641.5" x2="66" y2="641.5" stroke="#b8b8b8"/>
<line x1="64" y1="647.5" x2="66" y2="647.5" stroke="#b8b8b8"/>
<line x1="64" y1="652.5" x2="66" y2="652.5" stroke="#b8b8b8"/>
<line x1="61" y1="658.5" x2="66" y2="658.5" stroke="#dcdcdc"/>
<line x1="64" y1="664.5" x2="66" y2="664.5" stroke="#b8b8b8"/>
<line x1="64" y1="670.5" x2="66" y2="670.5" stroke="#b8b8b8"/>
<line x1="64" y1="676.5" x2="66" y2="676.5" stroke="#b8b8b8"/>
<line x1="61" y1="682.5" x2="66" y2="682.5" stroke="#dcdcdc"/>
<line x1="64" y1="687.5" x2="66" y2="687.5" stroke="#b8b8b8"/>
<line x1="64" y1="693.5" x2="66" y2="693.5" stroke="#b8b8b8"/>
<line x1="64" y1="699.5" x2="66" y2="699.5" stroke="#b8b8b8"/>
<line x1="57" y1="705.5" x2="66" y2="705.5" stroke="#dcdcdc"/>
<line x1="64" y1="711.5" x2="66" y2="711.5" stroke="#b8b8b8"/>
<line x1="64" y1="716.5" x2="66" y2="716.5" stroke="#b8b8b8"/>
<line x1="64" y1="722.5" x2="66" y2="722.5" stroke="#b8b8b8"/>
<line x1="61" y1="728.5" x2="66" y2="728.5" stroke="#dcdcdc"/>
<line x1="64" y1="734.5" x2="66" y2="734.5" stroke="#b8b8b8"/>
<line x1="64" y1="740.5" x2="66" y2="740.5" stroke="#b8b8b8"/>
<line x1="64" y1="746.5" x2="66" y2="746.5" stroke="#b8b8b8"/>
<line x1="61" y1="751.5" x2="66" y2="751.5" stroke="#dcdcdc"/>
<line x1="64" y1="757.5" x2="66" y2="757.5" stroke="#b8b8b8"/>
<line x1="64" y1="763.5" x2="66" y2="763.5" stroke="#b8b8b8"/>
<line x1="64" y1="769.5" x2="66" y2="769.5" stroke="#b8b8b8"/>
<line x1="61" y1="775.5" x2="66" y2="775.5" stroke="#dcdcdc"/>
<line x1="64" y1="781.5" x2="66" y2="781.5" stroke="#b8b8b8"/>
<line x1="64" y1="786.5" x2="66" y2="786.5" stroke="#b8b8b8"/>
<line x1="64" y1="792.5" x2="66" y2="792.5" stroke="#b8b8b8"/>
<line x1="61" y1="798.5" x2="66" y2="798.5" stroke="#dcdcdc"/>
<line x1="64" y1="804.5" x2="66" y2="804.5" stroke="#b8b8b8"/>
<line x1="64" y1="810.5" x2="66" y2="810.5" stroke="#b8b8b8"/>
<line x1="64" y1="815.5" x2="66" y2="815.5" stroke="#b8b8b8"/>
<line x1="61" y1="821.5" x2="66" y2="821.5" stroke="#dcdcdc"/>
<line x1="64" y1="827.5" x2="66" y2="827.5" stroke="#b8b8b8"/>
<line x1="64" y1="833.5" x2="66" y2="833.5" stroke="#b8b8b8"/>
<line x1="64" y1="839.5" x2="66" y2="839.5" stroke="#b8b8b8"/>
<line x1="61" y1="845.5" x2="66" y2="845.5" stroke="#dcdcdc"/>
<line x1="64" y1="850.5" x2="66" y2="850.5" stroke="#b8b8b8"/>
<line x1="64" y1="856.5" x2="66" y2="856.5" stroke="#b8b8b8"/>
<line x1="64" y1="862.5" x2="66" y2="862.5" stroke="#b8b8b8"/>
<line x1="61" y1="868.5" x2="66" y2="868.5" stroke="#dcdcdc"/>
<line x1="64" y1="874.5" x2="66" y2="874.5" stroke="#b8b8b8"/>
<line x1="64" y1="880.5" x2="66" y2="880.5" stroke="#b8b8b8"/>
<line x1="64" y1="885.5" x2="66" y2="885.5" stroke="#b8b8b8"/>
<line x1="61" y1="891.5" x2="66" y2="891.5" stroke="#dcdcdc"/>
<line x1="64" y1="897.5" x2="66" y2="897.5" stroke="#b8b8b8"/>
<line x1="64" y1="903.5" x2="66" y2="903.5" stroke="#b8b8b8"/>
<line x1="64" y1="909.5" x2="66" y2="909.5" stroke="#b8b8b8"/>
<line x1="61" y1="915.5" x2="66" y2="915.5" stroke="#dcdcdc"/>
<line x1="64" y1="920.5" x2="66" y2="920.5" stroke="#b8b8b8"/>
<line x1="64" y1="926.5" x2="66" y2="926.5" stroke="#b8b8b8"/>
<line x1="64" y1="932.5" x2="66" y2="932.5" stroke="#b8b8b8"/>
</g>
<rect x="819" y="93" width="2" height="22" fill="#b8b8b8"/>
<rect x="44" y="489.9" width="22" height="1.1" fill="#e4e4e4"/>
<g font-family="Liberation Sans" font-size="10.3" fill="#d4d4d4" text-anchor="middle">
<text x="114.5" y="104.2">2</text>
<text x="346.5" y="104.2">2.25</text>
<text x="579.3" y="104.2">2.5</text>
<text x="812" y="104.2">2.75</text>
<text x="1044.8" y="104.2">3</text>
<text font-size="9.6" transform="translate(54.8,239.3) rotate(-90)">5.5</text>
<text font-size="9.6" transform="translate(54.8,472.3) rotate(-90)">5.75</text>
<text font-size="9.6" transform="translate(54.8,705.3) rotate(-90)">6</text>
</g>
<text x="47.5" y="108" font-family="Liberation Sans" font-size="10" fill="#d8d8d8">cm</text>
</svg>

<!-- /CANVAS -->

<!-- PANEL -->
<div class="a" style="left:1097px;top:93px;width:2px;height:843px;background:#2a2a2a"></div>
<div class="a" style="left:1099px;top:93px;width:401px;height:843px;background:#323232"></div>
<div class="a" style="left:1099px;top:94.6px;width:401px;height:21.9px;background:#2b2b2b"></div>
<div class="a" style="left:1120px;top:95.5px;width:41.3px;height:21px;background:#3c3c3c"></div>
<div class="a" style="left:1107px;top:101px;width:1px;height:9px;background:#4a4a4a"></div><div class="a" style="left:1110px;top:101px;width:1px;height:9px;background:#4a4a4a"></div>
<div class="t" style="left:1123px;top:100.7px;font-size:11.5px;color:#e8e8e8">Layers</div>
<div class="t" style="left:1167.4px;top:100.7px;font-size:11.5px;color:#a0a0a0">Transform</div>
<div class="t" style="left:1229.6px;top:100.7px;font-size:11.5px;color:#a0a0a0">Character</div>
<div class="t" style="left:1290.6px;top:100.7px;font-size:11.5px;color:#a0a0a0">Paragraph</div>
<div class="t" style="left:1354.5px;top:100.7px;font-size:11.5px;color:#a0a0a0">Effects</div>
<div class="a" style="left:1224.8px;top:100px;width:1px;height:12px;background:#4a4a4a"></div>
<div class="a" style="left:1286.3px;top:100px;width:1px;height:12px;background:#4a4a4a"></div>
<div class="a" style="left:1349.5px;top:100px;width:1px;height:12px;background:#4a4a4a"></div>
<svg class="a" style="left:1478px;top:98px" width="22" height="14" viewBox="1478 98 22 14"><g stroke="#d0d0d0" stroke-width="1"><line x1="1482" y1="101.5" x2="1491" y2="101.5"/><line x1="1482" y1="103.5" x2="1491" y2="103.5"/><line x1="1482" y1="105.5" x2="1491" y2="105.5"/><line x1="1482" y1="107.5" x2="1491" y2="107.5" stroke="#aaa"/></g><path d="M1493,107 H1497.5 L1495.25,110Z" fill="#e0e0e0"/></svg>
<div class="a" style="left:1099px;top:116.5px;width:401px;height:32.5px;background:#3c3c3c"></div>
<div class="t" style="left:1104.6px;top:127.5px;font-size:12px;color:#e4e4e4">Opacity:</div>
<div class="a" style="left:1165.4px;top:123.8px;width:52.3px;height:22px;background:#2f2f2f;border-radius:4px;box-shadow:inset 0 0 0 1px #2a2a2a"></div>
<div class="t" style="left:1168px;top:129.1px;font-size:12px;color:#ececec">100 %</div>
<svg class="a" style="left:1206px;top:131px" width="10" height="10" viewBox="0 0 10 10"><path d="M2,2 H8 L5,6.5Z" fill="#ddd"/></svg>
<div class="a" style="left:1220.7px;top:123.5px;width:231px;height:21px;background:#333;border-radius:4px;box-shadow:inset 0 0 0 1px #2a2a2a"></div>
<div class="t" style="left:1226px;top:128.5px;font-size:12px;color:#ececec">Normal</div>
<svg class="a" style="left:1438px;top:126px" width="10" height="16" viewBox="0 0 10 16"><path d="M2,5.5 H8 L5,1.5Z M2,10 H8 L5,14Z" fill="#ccc"/></svg>
<svg class="a" style="left:1453px;top:124px" width="40" height="20" viewBox="1453 124 40 20"><g transform="translate(1462.5,133.6)" fill="#a0a0a0"><rect x="-1.6" y="-7.5" width="3.2" height="4" transform="rotate(0)"/><rect x="-1.6" y="-7.5" width="3.2" height="4" transform="rotate(45)"/><rect x="-1.6" y="-7.5" width="3.2" height="4" transform="rotate(90)"/><rect x="-1.6" y="-7.5" width="3.2" height="4" transform="rotate(135)"/><rect x="-1.6" y="-7.5" width="3.2" height="4" transform="rotate(180)"/><rect x="-1.6" y="-7.5" width="3.2" height="4" transform="rotate(225)"/><rect x="-1.6" y="-7.5" width="3.2" height="4" transform="rotate(270)"/><rect x="-1.6" y="-7.5" width="3.2" height="4" transform="rotate(315)"/><circle r="5.3"/><circle r="2.2" fill="#3c3c3c"/></g><path d="M1481.3,133 V130.5 Q1481.3,127.3 1484.1,127.3 Q1486.9,127.3 1486.9,130.5 V133" stroke="#a0a0a0" stroke-width="1.5" fill="none"/><rect x="1479.8" y="132.5" width="8.6" height="7.6" rx="1" fill="#a0a0a0"/></svg>
<div class="a" style="left:1099px;top:149px;width:401px;height:490px;background:#343434"></div>
<div class="a" style="left:1099px;top:150.0px;width:385px;height:36px;background:#3a3a3a"></div>
<div class="a" style="left:1099px;top:150.0px;width:385px;height:34.8px;background:#5b7fa8"></div>
<div class="a" style="left:1099px;top:184.8px;width:385px;height:1.4px;background:#2b2b2b"></div>
<div class="a" style="left:1144.0px;top:151.1px;width:33px;height:33px;background:#282828;border:1px solid #141414"></div>
<div class="t" style="left:1182.5px;top:161.9px;font-size:12px;color:#c4c4c4">(Curves)</div>
<div class="a" style="left:1450px;top:160.1px;width:14px;height:14px;background:linear-gradient(#272727,#2c2c2c 60%,#3d3d3d);border-radius:3px;box-shadow:0 0 0 1px #242424"></div>
<svg class="a" style="left:1450px;top:160.1px" width="14" height="14" viewBox="0 0 14 14"><path d="M3,7.5 L6,10.5 L11.5,3" stroke="#f0f0f0" stroke-width="1.4" fill="none"/></svg>
<div class="a" style="left:1099px;top:186.2px;width:385px;height:36px;background:#3a3a3a"></div>
<div class="a" style="left:1099px;top:186.2px;width:385px;height:34.8px;background:#3a3a3a"></div>
<div class="a" style="left:1099px;top:220.9px;width:385px;height:1.4px;background:#2b2b2b"></div>
<div class="a" style="left:1144.0px;top:187.2px;width:33px;height:33px;background:#282828;border:1px solid #141414"></div>
<svg class="a" style="left:1144.0px;top:187.2px" width="33" height="33" viewBox="0 0 33 33"><path d="M3,20 Q5,14 11,13.5 Q10,19.5 3,20Z" fill="#b08d60"/><rect x="11.5" y="14" width="6" height="1" fill="#8a6e48"/><rect x="11.5" y="17" width="6" height="1" fill="#8a6e48"/><text x="26" y="18.5" font-family="Liberation Sans" font-size="7" fill="#b08d60" text-anchor="middle">60</text><rect x="22.5" y="20" width="7" height="0.8" fill="#8a6e48"/></svg>
<svg class="a" style="left:1124.8px;top:195.7px" width="16" height="16" viewBox="-8 -8 16 16"><circle r="8" fill="#2b2b2b"/><path d="M-2.5,-4.2 V4.2 L4,0Z" fill="#cfcfcf"/></svg>
<div class="t" style="left:1182.5px;top:198.0px;font-size:12px;color:#c4c4c4">(Group)</div>
<div class="a" style="left:1450px;top:196.2px;width:14px;height:14px;background:linear-gradient(#272727,#2c2c2c 60%,#3d3d3d);border-radius:3px;box-shadow:0 0 0 1px #242424"></div>
<svg class="a" style="left:1450px;top:196.2px" width="14" height="14" viewBox="0 0 14 14"><path d="M3,7.5 L6,10.5 L11.5,3" stroke="#f0f0f0" stroke-width="1.4" fill="none"/></svg>
<div class="a" style="left:1099px;top:222.3px;width:385px;height:36px;background:#3a3a3a"></div>
<div class="a" style="left:1099px;top:222.3px;width:385px;height:34.8px;background:#3a3a3a"></div>
<div class="a" style="left:1099px;top:257.1px;width:385px;height:1.4px;background:#2b2b2b"></div>
<div class="a" style="left:1144.0px;top:223.4px;width:33px;height:33px;background:#282828;border:1px solid #141414"></div>
<div class="a" style="left:1149.7px;top:229.0px;width:21px;height:21px;background:linear-gradient(90deg,#bdbdbd,#f0f0f0 50%,#bdbdbd);border:1px solid #888;box-shadow:inset 0 0 0 1.2px #fafafa"></div>
<div class="t" style="left:1153.2px;top:231.1px;font-family:'Liberation Serif';font-weight:bold;font-size:20px;color:#111">T</div>
<div class="t" style="left:1182.5px;top:234.2px;font-size:12px;color:#c4c4c4">(This bag is made of 100%)</div>
<div class="a" style="left:1450px;top:232.4px;width:14px;height:14px;background:linear-gradient(#272727,#2c2c2c 60%,#3d3d3d);border-radius:3px;box-shadow:0 0 0 1px #242424"></div>
<svg class="a" style="left:1450px;top:232.4px" width="14" height="14" viewBox="0 0 14 14"><path d="M3,7.5 L6,10.5 L11.5,3" stroke="#f0f0f0" stroke-width="1.4" fill="none"/></svg>
<div class="a" style="left:1099px;top:258.4px;width:385px;height:36px;background:#3a3a3a"></div>
<div class="a" style="left:1099px;top:258.4px;width:385px;height:34.8px;background:#3a3a3a"></div>
<div class="a" style="left:1099px;top:293.2px;width:385px;height:1.4px;background:#2b2b2b"></div>
<div class="a" style="left:1144.0px;top:259.5px;width:33px;height:33px;background:#282828;border:1px solid #141414"></div>
<div class="t" style="left:1182.5px;top:270.3px;font-size:12px;color:#c4c4c4">(Group)</div>
<div class="a" style="left:1450px;top:268.5px;width:14px;height:14px;background:linear-gradient(#272727,#2c2c2c 60%,#3d3d3d);border-radius:3px;box-shadow:0 0 0 1px #242424"></div>
<svg class="a" style="left:1450px;top:268.5px" width="14" height="14" viewBox="0 0 14 14"><path d="M3,7.5 L6,10.5 L11.5,3" stroke="#f0f0f0" stroke-width="1.4" fill="none"/></svg>
<div class="a" style="left:1099px;top:294.6px;width:385px;height:36px;background:#3a3a3a"></div>
<div class="a" style="left:1099px;top:294.6px;width:385px;height:34.8px;background:#3a3a3a"></div>
<div class="a" style="left:1099px;top:329.4px;width:385px;height:1.4px;background:#2b2b2b"></div>
<div class="a" style="left:1144.0px;top:295.7px;width:33px;height:33px;background:#282828;border:1px solid #141414"></div>
<div class="a" style="left:1149.7px;top:301.3px;width:21px;height:21px;background:linear-gradient(90deg,#bdbdbd,#f0f0f0 50%,#bdbdbd);border:1px solid #888;box-shadow:inset 0 0 0 1.2px #fafafa"></div>
<div class="t" style="left:1153.2px;top:303.4px;font-family:'Liberation Serif';font-weight:bold;font-size:20px;color:#111">T</div>
<div class="t" style="left:1182.5px;top:306.5px;font-size:12px;color:#c4c4c4">(Effervescent&para;Mouthwash Ta)</div>
<div class="a" style="left:1450px;top:304.7px;width:14px;height:14px;background:linear-gradient(#272727,#2c2c2c 60%,#3d3d3d);border-radius:3px;box-shadow:0 0 0 1px #242424"></div>
<svg class="a" style="left:1450px;top:304.7px" width="14" height="14" viewBox="0 0 14 14"><path d="M3,7.5 L6,10.5 L11.5,3" stroke="#f0f0f0" stroke-width="1.4" fill="none"/></svg>
<div class="a" style="left:1099px;top:330.7px;width:385px;height:36px;background:#3a3a3a"></div>
<div class="a" style="left:1099px;top:330.7px;width:385px;height:34.8px;background:#3a3a3a"></div>
<div class="a" style="left:1099px;top:365.5px;width:385px;height:1.4px;background:#2b2b2b"></div>
<div class="a" style="left:1144.0px;top:331.8px;width:33px;height:33px;background:#282828;border:1px solid #141414"></div>
<svg class="a" style="left:1144.0px;top:331.8px" width="33" height="33" viewBox="0 0 33 33"><path d="M7,7 Q9,5 11,7 Q13,9 15,6 Q17,4 20,7 M4,12 Q8,9 12,11 Q16,13 20,10 Q24,8 29,11" fill="none" stroke="#0c5056" stroke-width="1"/><path d="M9,18 Q16,15 25,17 Q24,25 17,26 Q10,25 9,18Z" fill="#0c5056"/></svg>
<svg class="a" style="left:1124.8px;top:340.2px" width="16" height="16" viewBox="-8 -8 16 16"><circle r="8" fill="#2b2b2b"/><path d="M-2.5,-4.2 V4.2 L4,0Z" fill="#cfcfcf"/></svg>
<div class="t" style="left:1182.5px;top:342.6px;font-size:12px;color:#c4c4c4">(Group)</div>
<div class="a" style="left:1450px;top:340.8px;width:14px;height:14px;background:linear-gradient(#272727,#2c2c2c 60%,#3d3d3d);border-radius:3px;box-shadow:0 0 0 1px #242424"></div>
<svg class="a" style="left:1450px;top:340.8px" width="14" height="14" viewBox="0 0 14 14"><path d="M3,7.5 L6,10.5 L11.5,3" stroke="#f0f0f0" stroke-width="1.4" fill="none"/></svg>
<div class="a" style="left:1099px;top:366.9px;width:385px;height:36px;background:#3a3a3a"></div>
<div class="a" style="left:1099px;top:366.9px;width:385px;height:34.8px;background:#3a3a3a"></div>
<div class="a" style="left:1099px;top:401.7px;width:385px;height:1.4px;background:#2b2b2b"></div>
<div class="a" style="left:1144.0px;top:368.0px;width:33px;height:33px;background:#282828;border:1px solid #141414"></div>
<div class="t" style="left:1182.5px;top:378.8px;font-size:12px;color:#c4c4c4">(Curve)</div>
<div class="a" style="left:1450px;top:377.0px;width:14px;height:14px;background:linear-gradient(#272727,#2c2c2c 60%,#3d3d3d);border-radius:3px;box-shadow:0 0 0 1px #242424"></div>
<svg class="a" style="left:1450px;top:377.0px" width="14" height="14" viewBox="0 0 14 14"><path d="M3,7.5 L6,10.5 L11.5,3" stroke="#f0f0f0" stroke-width="1.4" fill="none"/></svg>
<div class="a" style="left:1099px;top:403.0px;width:385px;height:36px;background:#3a3a3a"></div>
<div class="a" style="left:1099px;top:403.0px;width:385px;height:34.8px;background:#3a3a3a"></div>
<div class="a" style="left:1099px;top:437.8px;width:385px;height:1.4px;background:#2b2b2b"></div>
<div class="a" style="left:1144.0px;top:404.1px;width:33px;height:33px;background:#282828;border:1px solid #141414"></div>
<div class="a" style="left:1146.0px;top:414.2px;width:29px;height:12px;background:#0a4a50;clip-path:polygon(0 10%,100% 25%,100% 100%,0 100%)"></div>
<div class="t" style="left:1182.5px;top:414.9px;font-size:12px;color:#c4c4c4">(Curve)</div>
<div class="a" style="left:1450px;top:413.1px;width:14px;height:14px;background:linear-gradient(#272727,#2c2c2c 60%,#3d3d3d);border-radius:3px;box-shadow:0 0 0 1px #242424"></div>
<svg class="a" style="left:1450px;top:413.1px" width="14" height="14" viewBox="0 0 14 14"><path d="M3,7.5 L6,10.5 L11.5,3" stroke="#f0f0f0" stroke-width="1.4" fill="none"/></svg>
<div class="a" style="left:1099px;top:439.2px;width:385px;height:36px;background:#3a3a3a"></div>
<div class="a" style="left:1099px;top:439.2px;width:385px;height:34.8px;background:#3a3a3a"></div>
<div class="a" style="left:1099px;top:474.0px;width:385px;height:1.4px;background:#2b2b2b"></div>
<div class="a" style="left:1144.0px;top:440.3px;width:33px;height:33px;background:#282828;border:1px solid #141414"></div>
<div class="a" style="left:1149.0px;top:441.3px;width:23px;height:31px;background:#b08d60"></div>
<div class="t" style="left:1182.5px;top:451.1px;font-size:12px;color:#c4c4c4">(Rectangle)</div>
<div class="a" style="left:1450px;top:449.3px;width:14px;height:14px;background:linear-gradient(#272727,#2c2c2c 60%,#3d3d3d);border-radius:3px;box-shadow:0 0 0 1px #242424"></div>
<svg class="a" style="left:1450px;top:449.3px" width="14" height="14" viewBox="0 0 14 14"><path d="M3,7.5 L6,10.5 L11.5,3" stroke="#f0f0f0" stroke-width="1.4" fill="none"/></svg>
<div class="a" style="left:1099px;top:475.3px;width:385px;height:36px;background:#3a3a3a"></div>
<div class="a" style="left:1099px;top:475.3px;width:385px;height:34.8px;background:#3a3a3a"></div>
<div class="a" style="left:1099px;top:510.1px;width:385px;height:1.4px;background:#2b2b2b"></div>
<div class="a" style="left:1133.4px;top:476.4px;width:33px;height:33px;background:#282828;border:1px solid #141414"></div>
<svg class="a" style="left:1133.4px;top:476.4px" width="33" height="33" viewBox="0 0 33 33"><rect x="4.7" y="1.5" width="23.1" height="30" fill="#b0905f"/><rect x="4.7" y="22.8" width="23.1" height="8.7" fill="#0c5358"/><path d="M13,5 Q16,2.5 19,5" stroke="#0c5358" stroke-width="1" fill="none"/><circle cx="17.5" cy="6" r="1.5" fill="#0c5358"/><rect x="10" y="9.5" width="12" height="1.3" fill="#0c5358" opacity="0.8"/><rect x="8" y="12" width="16" height="1.3" fill="#0c5358" opacity="0.8"/><rect x="9" y="16" width="14" height="0.8" fill="#6a6a50"/><rect x="9" y="18" width="14" height="0.8" fill="#6a6a50"/><path d="M7.5,28 Q9,24.5 12,25 Q11,28.5 7.5,28Z" fill="#e8dcc0"/><rect x="13.5" y="25" width="4" height="4" fill="none" stroke="#e8dcc0" stroke-width="0.7"/><rect x="20" y="25" width="4" height="4" fill="none" stroke="#e8dcc0" stroke-width="0.7"/></svg>
<svg class="a" style="left:1114.0px;top:484.8px" width="16" height="16" viewBox="-8 -8 16 16"><circle r="8" fill="#2b2b2b"/><path d="M-2.5,-4.2 V4.2 L4,0Z" fill="#cfcfcf"/></svg>
<div class="t" style="left:1171.9px;top:487.2px;font-size:12px;color:#c4c4c4"><b style="color:#f2f2f2">editable</b> <span style="color:#a8a8a8">(Layer)</span></div>
<div class="a" style="left:1450px;top:485.4px;width:14px;height:14px;background:linear-gradient(#272727,#2c2c2c 60%,#3d3d3d);border-radius:3px;box-shadow:0 0 0 1px #242424"></div>
<div class="a" style="left:1195px;top:508.5px;width:277px;height:1.5px;background:linear-gradient(90deg,rgba(58,142,228,0),#3a8ee4 30%)"></div>
<div class="a" style="left:1099px;top:511.5px;width:385px;height:36px;background:#3a3a3a"></div>
<div class="a" style="left:1099px;top:511.5px;width:373px;height:34.8px;background:#545454"></div>
<div class="a" style="left:1099px;top:546.3px;width:385px;height:1.4px;background:#2b2b2b"></div>
<div class="a" style="left:1122.6px;top:512.6px;width:33px;height:33px;background:#282828;border:1px solid #141414"></div>
<svg class="a" style="left:1122.6px;top:512.6px" width="33" height="33" viewBox="0 0 33 33"><rect x="4.5" y="1.5" width="23.6" height="30" fill="#b0905f"/><path d="M4.5,27 Q16,24.5 28.1,27 V31.5 H4.5Z" fill="#0c5358"/><circle cx="24" cy="5" r="4.3" fill="#0c5358"/><rect x="7.5" y="6" width="6" height="0.8" fill="#6a6a50"/><rect x="7.5" y="10" width="12" height="0.8" fill="#6a6a50"/><rect x="7.5" y="12" width="12" height="0.8" fill="#6a6a50"/><rect x="7.5" y="16" width="14" height="0.8" fill="#6a6a50"/><rect x="7.5" y="18" width="10" height="0.8" fill="#6a6a50"/><circle cx="22" cy="16" r="1.8" fill="none" stroke="#6a6a50" stroke-width="0.6"/><rect x="11.5" y="21" width="10" height="3.6" fill="#3a4a40" opacity="0.75"/></svg>
<svg class="a" style="left:1103.0px;top:521.0px" width="16" height="16" viewBox="-8 -8 16 16"><circle r="8" fill="#2b2b2b"/><path d="M-3.8,-3 H3.8 L0,3.8Z" fill="#cfcfcf"/></svg>
<div class="t" style="left:1161.1px;top:523.4px;font-size:12px;color:#c4c4c4"><b style="color:#f2f2f2">bag-back</b> <span style="color:#b4b4b4">(Artboard)</span></div>
<div class="a" style="left:1450px;top:521.6px;width:14px;height:14px;background:linear-gradient(#272727,#2c2c2c 60%,#3d3d3d);border-radius:3px;box-shadow:0 0 0 1px #242424"></div>
<svg class="a" style="left:1450px;top:521.6px" width="14" height="14" viewBox="0 0 14 14"><path d="M3,7.5 L6,10.5 L11.5,3" stroke="#f0f0f0" stroke-width="1.4" fill="none"/></svg>
<div class="a" style="left:1099px;top:547.6px;width:385px;height:36px;background:#3a3a3a"></div>
<div class="a" style="left:1099px;top:547.6px;width:385px;height:34.8px;background:#3a3a3a"></div>
<div class="a" style="left:1099px;top:582.4px;width:385px;height:1.4px;background:#2b2b2b"></div>
<div class="a" style="left:1133.4px;top:548.7px;width:33px;height:33px;background:#282828;border:1px solid #141414"></div>
<div class="t" style="left:1171.9px;top:559.5px;font-size:12px;color:#c4c4c4">(Layer)</div>
<div class="a" style="left:1450px;top:557.7px;width:14px;height:14px;background:linear-gradient(#272727,#2c2c2c 60%,#3d3d3d);border-radius:3px;box-shadow:0 0 0 1px #242424"></div>
<svg class="a" style="left:1450px;top:557.7px" width="14" height="14" viewBox="0 0 14 14"><path d="M3,7.5 L6,10.5 L11.5,3" stroke="#f0f0f0" stroke-width="1.4" fill="none"/></svg>
<div class="a" style="left:1195px;top:580.8px;width:277px;height:1.5px;background:linear-gradient(90deg,rgba(58,142,228,0),#3a8ee4 30%)"></div>
<div class="a" style="left:1099px;top:583.8px;width:385px;height:36px;background:#3a3a3a"></div>
<div class="a" style="left:1099px;top:583.8px;width:385px;height:34.8px;background:#3a3a3a"></div>
<div class="a" style="left:1099px;top:618.6px;width:385px;height:1.4px;background:#2b2b2b"></div>
<div class="a" style="left:1133.4px;top:584.9px;width:33px;height:33px;background:#282828;border:1px solid #141414"></div>
<svg class="a" style="left:1133.4px;top:584.9px" width="33" height="33" viewBox="0 0 33 33"><path d="M6.5,8 Q11,3 16.5,6 Q22,3 26.5,8 Q30,18 26,27 Q21,31.5 16.5,31 Q10,31.5 7,27 Q3,18 6.5,8Z" fill="none" stroke="#0c5056" stroke-width="0.9"/><path d="M6,15 Q11,12 16.5,14 Q22,16 27,13" fill="none" stroke="#0c5056" stroke-width="0.9"/><circle cx="13.5" cy="17.5" r="1.2" fill="#0c5056"/><circle cx="15" cy="21" r="1.1" fill="#0c5056"/><circle cx="12.5" cy="23.5" r="1.2" fill="#0c5056"/><ellipse cx="14.5" cy="27" rx="3.5" ry="2" fill="none" stroke="#0c5056" stroke-width="0.9"/></svg>
<svg class="a" style="left:1114.0px;top:593.3px" width="16" height="16" viewBox="-8 -8 16 16"><circle r="8" fill="#2b2b2b"/><path d="M-2.5,-4.2 V4.2 L4,0Z" fill="#cfcfcf"/></svg>
<div class="t" style="left:1171.9px;top:595.7px;font-size:12px;color:#c4c4c4">(Group)</div>
<div class="a" style="left:1450px;top:593.9px;width:14px;height:14px;background:linear-gradient(#272727,#2c2c2c 60%,#3d3d3d);border-radius:3px;box-shadow:0 0 0 1px #242424"></div>
<svg class="a" style="left:1450px;top:593.9px" width="14" height="14" viewBox="0 0 14 14"><path d="M3,7.5 L6,10.5 L11.5,3" stroke="#f0f0f0" stroke-width="1.4" fill="none"/></svg>
<div class="a" style="left:1099px;top:619.9px;width:385px;height:36px;background:#3a3a3a"></div>
<div class="a" style="left:1099px;top:619.9px;width:385px;height:34.8px;background:#3a3a3a"></div>
<div class="a" style="left:1099px;top:654.7px;width:385px;height:1.4px;background:#2b2b2b"></div>
<div class="a" style="left:1133.4px;top:621.0px;width:33px;height:33px;background:#282828;border:1px solid #141414"></div>
<svg class="a" style="left:1133.4px;top:621.0px" width="33" height="33" viewBox="0 0 33 33"><path d="M10,4 Q12,2 14,4 Q16,6 18,3 Q20,2 22,4 M7,10 Q10,6 14,8 Q18,10 22,7 Q25,6 27,9" fill="none" stroke="#b08d50" stroke-width="0.9"/><path d="M10,14 Q16,11 24,13 Q22,19 16,19 Q11,18 10,14Z" fill="#b08d50"/></svg>
<svg class="a" style="left:1114.0px;top:629.4px" width="16" height="16" viewBox="-8 -8 16 16"><circle r="8" fill="#2b2b2b"/><path d="M-2.5,-4.2 V4.2 L4,0Z" fill="#cfcfcf"/></svg>
<div class="t" style="left:1171.9px;top:631.8px;font-size:12px;color:#c4c4c4">(Group)</div>
<div class="a" style="left:1450px;top:630.0px;width:14px;height:14px;background:linear-gradient(#272727,#2c2c2c 60%,#3d3d3d);border-radius:3px;box-shadow:0 0 0 1px #242424"></div>
<svg class="a" style="left:1450px;top:630.0px" width="14" height="14" viewBox="0 0 14 14"><path d="M3,7.5 L6,10.5 L11.5,3" stroke="#f0f0f0" stroke-width="1.4" fill="none"/></svg>
<div class="a" style="left:1099px;top:638.5px;width:401px;height:25.5px;background:#3c3c3c"></div>
<div class="a" style="left:1104px;top:639.7px;width:23px;height:22px;background:#474747"></div>
<svg class="a" style="left:1099px;top:638px" width="401" height="27" viewBox="1099 638 401 27"><path d="M1108,645.8 L1115.5,642.5 L1123,645.8 L1115.5,649Z" fill="none" stroke="#aaa" stroke-width="1.4"/><path d="M1108,649.5 L1115.5,653 L1123,649.5 M1108,653.3 L1115.5,656.8 L1123,653.3" fill="none" stroke="#aaa" stroke-width="1.4"/><rect x="1301.6" y="643.5" width="15.4" height="14" fill="#b8b8b8"/><circle cx="1309.3" cy="650.5" r="4.6" fill="#2c2c2c"/><circle cx="1334" cy="651" r="6.2" fill="#3c3c3c" stroke="#b8b8b8" stroke-width="1"/><path d="M1338,645.8 A6.2,6.2 0 1 0 1330,656.2Z" fill="#b8b8b8"/><text x="1358" y="656" font-family="Liberation Serif" font-style="italic" font-size="15" fill="#b0b0b0" text-anchor="middle">fx</text><path d="M1430,643.5 H1436 L1440,647.5 V658.3 H1430Z M1436,643.5 V647.5 H1440" fill="none" stroke="#b8b8b8" stroke-width="1.1"/><rect x="1455.0" y="644.0" width="2.2" height="2.2" fill="#c0c0c0"/><rect x="1459.4" y="644.0" width="2.2" height="2.2" fill="#c0c0c0"/><rect x="1463.8" y="644.0" width="2.2" height="2.2" fill="#c0c0c0"/><rect x="1457.2" y="646.2" width="2.2" height="2.2" fill="#c0c0c0"/><rect x="1461.6" y="646.2" width="2.2" height="2.2" fill="#c0c0c0"/><rect x="1455.0" y="648.4" width="2.2" height="2.2" fill="#c0c0c0"/><rect x="1459.4" y="648.4" width="2.2" height="2.2" fill="#c0c0c0"/><rect x="1463.8" y="648.4" width="2.2" height="2.2" fill="#c0c0c0"/><rect x="1457.2" y="650.6" width="2.2" height="2.2" fill="#c0c0c0"/><rect x="1461.6" y="650.6" width="2.2" height="2.2" fill="#c0c0c0"/><rect x="1455.0" y="652.8" width="2.2" height="2.2" fill="#c0c0c0"/><rect x="1459.4" y="652.8" width="2.2" height="2.2" fill="#c0c0c0"/><rect x="1463.8" y="652.8" width="2.2" height="2.2" fill="#c0c0c0"/><rect x="1454.7" y="643.7" width="11" height="11" fill="none" stroke="#c0c0c0" stroke-width="0.8"/><path d="M1480.5,645.5 H1490.5 M1484,645.5 V643.5 H1487 V645.5 M1481.5,646.5 L1482.5,658 H1488.5 L1489.5,646.5 M1484,648 V656.5 M1487,648 V656.5" fill="none" stroke="#b8b8b8" stroke-width="1.1"/></svg>
<div class="a" style="left:1099px;top:664px;width:401px;height:2.6px;background:#2a2a2a"></div>
<div class="a" style="left:1099px;top:666.6px;width:401px;height:22.6px;background:#2a2a2a"></div>
<div class="a" style="left:1313.7px;top:667px;width:70.3px;height:22.2px;background:#3c3c3c"></div>
<div class="a" style="left:1107.5px;top:673px;width:1px;height:9px;background:#555"></div><div class="a" style="left:1110.5px;top:673px;width:1px;height:9px;background:#555"></div>
<div class="t" style="left:1123.2px;top:672.5px;font-size:11.5px;color:#a0a0a0">Color</div>
<div class="t" style="left:1160.5px;top:672.5px;font-size:11.5px;color:#a0a0a0">Swatches</div>
<div class="t" style="left:1220.3px;top:672.5px;font-size:11.5px;color:#a0a0a0">Stroke</div>
<div class="t" style="left:1264.3px;top:672.5px;font-size:11.5px;color:#a0a0a0">Brushes</div>
<div class="a" style="left:1156px;top:672px;width:1px;height:12px;background:#4a4a4a"></div>
<div class="a" style="left:1215.8px;top:672px;width:1px;height:12px;background:#4a4a4a"></div>
<div class="a" style="left:1259.8px;top:672px;width:1px;height:12px;background:#4a4a4a"></div>
<div class="t" style="left:1317px;top:672.5px;font-size:11.5px;color:#f0f0f0">Appearance</div>
<div class="a" style="left:1099px;top:689.2px;width:401px;height:6.4px;background:#3c3c3c"></div>
<div class="a" style="left:1099px;top:695.6px;width:384px;height:35.8px;background:#3a3a3a;border-bottom:1px solid #2a2a2a"></div>
<div class="a" style="left:1117px;top:711.3px;width:5px;height:5px;border-radius:50%;background:#f0f0f0"></div>
<div class="t" style="left:1162.3px;top:708.6px;font-size:12px;color:#e0e0e0">Stroke: 0 pt, Normal</div>
<div class="a" style="left:1462.5px;top:706.2px;width:14px;height:14px;background:linear-gradient(#272727,#2c2c2c 60%,#3d3d3d);border-radius:3px;box-shadow:0 0 0 1px #242424"></div>
<svg class="a" style="left:1462.5px;top:706.2px" width="14" height="14" viewBox="0 0 14 14"><path d="M3,7.5 L6,10.5 L11.5,3" stroke="#f0f0f0" stroke-width="1.4" fill="none"/></svg>
<div class="a" style="left:1099px;top:731.4px;width:384px;height:35.8px;background:#3a3a3a;border-bottom:1px solid #2a2a2a"></div>
<div class="a" style="left:1117px;top:747.1px;width:5px;height:5px;border-radius:50%;background:#f0f0f0"></div>
<div class="t" style="left:1162.3px;top:744.4px;font-size:12px;color:#e0e0e0">Fill: Normal</div>
<div class="a" style="left:1462.5px;top:742.0px;width:14px;height:14px;background:linear-gradient(#272727,#2c2c2c 60%,#3d3d3d);border-radius:3px;box-shadow:0 0 0 1px #242424"></div>
<svg class="a" style="left:1462.5px;top:742.0px" width="14" height="14" viewBox="0 0 14 14"><path d="M3,7.5 L6,10.5 L11.5,3" stroke="#f0f0f0" stroke-width="1.4" fill="none"/></svg>
<svg class="a" style="left:1125px;top:698px" width="34" height="70" viewBox="1125 698 34 70"><circle cx="1141.3" cy="713.8" r="9" fill="#2e2e2e" stroke="#f4f4f4" stroke-width="6"/><line x1="1133" y1="722" x2="1136.5" y2="718.5" stroke="#e8262b" stroke-width="1.3"/><line x1="1146" y1="709" x2="1149.6" y2="705.5" stroke="#e8262b" stroke-width="1.3"/><circle cx="1141.3" cy="750.3" r="11.8" fill="#053d42" stroke="#1e1e1e" stroke-width="1"/></svg>
<div class="a" style="left:1099px;top:767px;width:384px;height:144.6px;background:#2d2d2d"></div>
<div class="a" style="left:1099px;top:911.8px;width:401px;height:24.2px;background:#3f3f3f"></div>
<svg class="a" style="left:1099px;top:911px" width="401" height="25" viewBox="1099 911 401 25"><circle cx="1114.6" cy="922.7" r="7.3" fill="none" stroke="#e0e0e0" stroke-width="1.2"/><path d="M1110.6,922.7 H1118.6 M1114.6,918.7 V926.7" stroke="#e0e0e0" stroke-width="1.3"/><circle cx="1202.4" cy="923.3" r="7.2" fill="#f0f0f0"/><path d="M1198.4,923.3 H1206.4 M1202.4,919.3 V927.3" stroke="#3f3f3f" stroke-width="1.6"/><path d="M1483,917.5 H1494 M1486.5,917.5 V915.5 H1490.5 V917.5 M1484,918.5 L1485,930 H1492 L1493,918.5 M1487,920 V928.5 M1490,920 V928.5" fill="none" stroke="#5a5a5a" stroke-width="1.1"/></svg>
<div class="t" style="left:1128px;top:917px;font-size:11.8px;color:#e0e0e0">Add Stroke</div>
<div class="t" style="left:1215px;top:917.5px;font-size:11.8px;color:#e0e0e0">Add Fill</div>
<div class="a" style="left:1489px;top:392px;width:7px;height:26px;border-radius:4px;background:#5a5a5a"></div>
<!-- /PANEL -->
  <!-- status -->
  <div class="t" style="left:22px;top:942px;font-size:12px;color:#bdbdbd">'Curves' selected. <b style="color:#f4f4f4">Drag</b> to move selection. <b style="color:#f4f4f4">Click</b> another object to select it. <b style="color:#f4f4f4">Click</b> on an empty area to deselect selection. <b style="color:#f4f4f4">&#8679;</b> to constrain. <b style="color:#f4f4f4">&#8984;</b> to clone selected objects. <b style="color:#f4f4f4">&#8997;</b> to ignore snapping.</div>
</div>
</body></html>
